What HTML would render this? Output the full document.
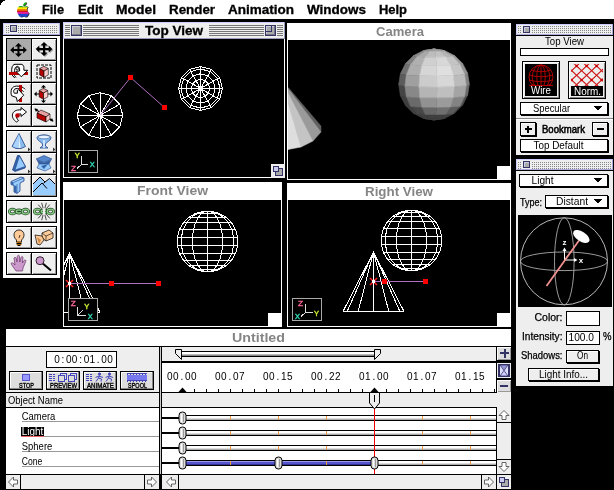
<!DOCTYPE html><html lang="en"><head><meta charset="utf-8"><title>3D Modeler - Untitled</title><style>
html,body{margin:0;padding:0;background:#000;}
#screen{position:relative;width:614px;height:490px;overflow:hidden;background:#000;font-family:"Liberation Sans",sans-serif;}
.win{position:absolute;overflow:hidden;will-change:transform;}
.win svg{position:absolute;left:0;top:0;display:block;}
text{white-space:pre;}
</style></head><body><div id="screen">
<div class="win menubar" style="left:0px;top:0px;width:614px;height:20px"><svg width="614" height="20" viewBox="0 0 614 20" shape-rendering="crispEdges"><rect x="0" y="0" width="614" height="19" fill="#ffffff" /><rect x="0" y="19" width="614" height="1" fill="#000000" /><rect x="0" y="0" width="5" height="1" fill="#000" /><rect x="0" y="1" width="3" height="1" fill="#000" /><rect x="0" y="2" width="2" height="1" fill="#000" /><rect x="0" y="3" width="1" height="1" fill="#000" /><rect x="0" y="4" width="1" height="1" fill="#000" /><clipPath id="apc"><path d="M19,6.6 C21,5.4 22,6.8 23.3,6.8 C24.8,6.8 26.2,5.4 28.2,6.8 C26.6,8.2 26.3,11 29,13 C28.2,15 27.2,17 25.8,17 C24.8,17 24.2,16.4 23.3,16.4 C22.4,16.4 21.8,17 20.8,17 C19,17 17,13 17,10.6 C17,8.6 18,7.1 19,6.6 Z M23,6 C23,3.8 24.6,2.3 26.4,2 C26.5,4 25,5.8 23,6 Z"/></clipPath><g shape-rendering="geometricPrecision"><path d="M19,6.6 C21,5.4 22,6.8 23.3,6.8 C24.8,6.8 26.2,5.4 28.2,6.8 C26.6,8.2 26.3,11 29,13 C28.2,15 27.2,17 25.8,17 C24.8,17 24.2,16.4 23.3,16.4 C22.4,16.4 21.8,17 20.8,17 C19,17 17,13 17,10.6 C17,8.6 18,7.1 19,6.6 Z M23,6 C23,3.8 24.6,2.3 26.4,2 C26.5,4 25,5.8 23,6 Z" fill="#333" transform="translate(0.7,0.5)"/><g clip-path="url(#apc)"><rect x="16" y="2" width="15" height="5.4" fill="#11aa11" /><rect x="16" y="7.2" width="15" height="2.2" fill="#ffe800" /><rect x="16" y="9.2" width="15" height="1.699999999999999" fill="#ff8800" /><rect x="16" y="10.7" width="15" height="1.400000000000001" fill="#dd1111" /><rect x="16" y="11.9" width="15" height="2.2" fill="#e020a0" /><rect x="16" y="13.9" width="15" height="3.8" fill="#2244cc" /></g></g><text x="42" y="14" font-family='"Liberation Sans", sans-serif' font-size="12" font-weight="bold" fill="#000" text-anchor="start" textLength="22" lengthAdjust="spacingAndGlyphs" stroke="#000" stroke-width="0.3">File</text><text x="78" y="14" font-family='"Liberation Sans", sans-serif' font-size="12" font-weight="bold" fill="#000" text-anchor="start" textLength="25" lengthAdjust="spacingAndGlyphs" stroke="#000" stroke-width="0.3">Edit</text><text x="116" y="14" font-family='"Liberation Sans", sans-serif' font-size="12" font-weight="bold" fill="#000" text-anchor="start" textLength="40" lengthAdjust="spacingAndGlyphs" stroke="#000" stroke-width="0.3">Model</text><text x="169" y="14" font-family='"Liberation Sans", sans-serif' font-size="12" font-weight="bold" fill="#000" text-anchor="start" textLength="46" lengthAdjust="spacingAndGlyphs" stroke="#000" stroke-width="0.3">Render</text><text x="228" y="14" font-family='"Liberation Sans", sans-serif' font-size="12" font-weight="bold" fill="#000" text-anchor="start" textLength="66" lengthAdjust="spacingAndGlyphs" stroke="#000" stroke-width="0.3">Animation</text><text x="307" y="14" font-family='"Liberation Sans", sans-serif' font-size="12" font-weight="bold" fill="#000" text-anchor="start" textLength="59" lengthAdjust="spacingAndGlyphs" stroke="#000" stroke-width="0.3">Windows</text><text x="379" y="14" font-family='"Liberation Sans", sans-serif' font-size="12" font-weight="bold" fill="#000" text-anchor="start" textLength="28" lengthAdjust="spacingAndGlyphs" stroke="#000" stroke-width="0.3">Help</text></svg></div>
<div class="win palette" style="left:3px;top:23px;width:57px;height:255px"><svg width="57" height="255" viewBox="3 23 57 255" shape-rendering="crispEdges"><defs><pattern id="dots" width="2" height="2" patternUnits="userSpaceOnUse"><rect x="0" y="0" width="1" height="1" fill="#888888"/></pattern></defs><rect x="3" y="23" width="57" height="255" fill="#ffffff" /><rect x="3" y="23" width="57" height="12" fill="#eeeeee" /><rect x="3" y="23" width="57" height="1" fill="#ccccff" /><rect x="3" y="34" width="57" height="1" fill="#aaaadd" /><rect x="3" y="23" width="1" height="12" fill="#ccccff" /><rect x="59" y="23" width="1" height="12" fill="#aaaadd" /><rect x="5" y="25" width="53" height="9" fill="url(#dots)"/><rect x="9" y="24" width="9" height="10" fill="#eeeeee" /><rect x="10.5" y="25.5" width="6" height="6" fill="#aaaaaa" stroke="#333366" stroke-width="1"/><rect x="11" y="26" width="5" height="1" fill="#ccccdd" /><rect x="11" y="26" width="1" height="5" fill="#ccccdd" /><rect x="3" y="35" width="57" height="1" fill="#000" /><rect x="6" y="38" width="51" height="89" fill="#000" /><rect x="7" y="39" width="24" height="21" fill="#aaaaaa" /><g shape-rendering="geometricPrecision"><rect x="12.2" y="49.0" width="12.600000000000001" height="2" fill="#000" /><rect x="17.5" y="45.0" width="2" height="10" fill="#000" /><polygon points="10.2,50.0 13.8,46.4 13.8,53.6" fill="#000" stroke="none" stroke-width="1" /><polygon points="26.8,50.0 23.2,46.4 23.2,53.6" fill="#000" stroke="none" stroke-width="1" /><polygon points="18.5,43.0 14.9,46.6 22.1,46.6" fill="#000" stroke="none" stroke-width="1" /><polygon points="18.5,57.0 14.9,53.4 22.1,53.4" fill="#000" stroke="none" stroke-width="1" /></g><rect x="32" y="39" width="24" height="21" fill="#eeeeee" /><rect x="32" y="39" width="24" height="1" fill="#ffffff" /><rect x="32" y="39" width="1" height="21" fill="#ffffff" /><rect x="33" y="59" width="23" height="1" fill="#999999" /><rect x="55" y="40" width="1" height="20" fill="#999999" /><g shape-rendering="geometricPrecision"><rect x="38.7" y="49.0" width="12.600000000000001" height="2" fill="#999999" /><rect x="44.0" y="45.0" width="2" height="10" fill="#999999" /><polygon points="36.7,50.0 40.3,46.4 40.3,53.6" fill="#999999" stroke="none" stroke-width="1" /><polygon points="53.3,50.0 49.7,46.4 49.7,53.6" fill="#999999" stroke="none" stroke-width="1" /><polygon points="45,43.0 41.4,46.6 48.6,46.6" fill="#999999" stroke="none" stroke-width="1" /><polygon points="45,57.0 41.4,53.4 48.6,53.4" fill="#999999" stroke="none" stroke-width="1" /><rect x="37.7" y="48.0" width="12.600000000000001" height="2" fill="#000" /><rect x="43.0" y="44.0" width="2" height="10" fill="#000" /><polygon points="35.7,49.0 39.3,45.4 39.3,52.6" fill="#000" stroke="none" stroke-width="1" /><polygon points="52.3,49.0 48.7,45.4 48.7,52.6" fill="#000" stroke="none" stroke-width="1" /><polygon points="44,42.0 40.4,45.6 47.6,45.6" fill="#000" stroke="none" stroke-width="1" /><polygon points="44,56.0 40.4,52.4 47.6,52.4" fill="#000" stroke="none" stroke-width="1" /></g><rect x="7" y="61" width="24" height="21" fill="#eeeeee" /><rect x="7" y="61" width="24" height="1" fill="#ffffff" /><rect x="7" y="61" width="1" height="21" fill="#ffffff" /><rect x="8" y="81" width="23" height="1" fill="#999999" /><rect x="30" y="62" width="1" height="20" fill="#999999" /><g shape-rendering="geometricPrecision"><rect x="9" y="72" width="19" height="3" fill="#bb0000" /><path d="M14.8,78 L12.1,75 C11.6,72 11.6,69.5 11.9,68 C12.3,65.8 13.5,64.3 15,64.3 L22,64.3 C23.3,65.2 23.9,66.5 23.9,67.5 L23.9,70.3 27.8,70.3 21.4,76.8 15.9,71.3 19.6,71 19.6,68.8 C19.4,67 18,66.3 17.2,66.4 C16.2,66.5 15.3,67.3 15,68.5 C14.2,71 14,74 14.5,75.5 L16,77.5" fill="#fff" stroke="#000" stroke-width="1" /><circle cx="17.3" cy="68.5" r="1.3" fill="none" stroke="#000" stroke-width="0.8"/><rect x="9" y="72" width="7.5" height="3" fill="#bb0000" /></g><rect x="32" y="61" width="24" height="21" fill="#eeeeee" /><rect x="32" y="61" width="24" height="1" fill="#ffffff" /><rect x="32" y="61" width="1" height="21" fill="#ffffff" /><rect x="33" y="81" width="23" height="1" fill="#999999" /><rect x="55" y="62" width="1" height="20" fill="#999999" /><g shape-rendering="geometricPrecision"><polyline points="37,65 51,65 51,78 37,78 37,65" fill="none" stroke="#000" stroke-width="1" stroke-dasharray="3 1"/><polygon points="44,66.34 48.3,68.5 44,71.06 39.7,68.5" fill="#e8a0a0" stroke="#000" stroke-width="0.6" /><polygon points="39.7,68.7 44,71.06 44,77.3 39.7,74.94" fill="#bb0000" stroke="#000" stroke-width="0.6" /><polygon points="48.3,68.7 44,71.06 44,77.3 48.3,74.94" fill="#ffcccc" stroke="#000" stroke-width="0.6" /></g><rect x="7" y="83" width="24" height="21" fill="#eeeeee" /><rect x="7" y="83" width="24" height="1" fill="#ffffff" /><rect x="7" y="83" width="1" height="21" fill="#ffffff" /><rect x="8" y="103" width="23" height="1" fill="#999999" /><rect x="30" y="84" width="1" height="20" fill="#999999" /><g shape-rendering="geometricPrecision"><rect x="19" y="85" width="3" height="17" fill="#bb0000" /><path d="M25,89.3 C23.5,87 20,86 16.4,86.1 C14,86.3 12.3,87.5 11.6,89 C10.8,91 10.9,94 11.6,95.7 L16.4,97.5 17.3,101.6 23.7,95.2 18.7,89.7 17.4,90.2 17.4,93.2 14.3,93.2 C13.5,92 13.5,90.5 14,89.8 C15,88.5 17,88.3 18.5,88.5 C20.5,88.8 22.5,90 23.5,91.8" fill="#fff" stroke="#000" stroke-width="1" /><rect x="19" y="85" width="3" height="4.6" fill="#bb0000" /><polygon points="19,102 22,102 22,97.6 19,100.4" fill="#bb0000" stroke="none" stroke-width="1" /></g><rect x="32" y="83" width="24" height="21" fill="#eeeeee" /><rect x="32" y="83" width="24" height="1" fill="#ffffff" /><rect x="32" y="83" width="1" height="21" fill="#ffffff" /><rect x="33" y="103" width="23" height="1" fill="#999999" /><rect x="55" y="84" width="1" height="20" fill="#999999" /><g shape-rendering="geometricPrecision"><rect x="36.0" y="93.5" width="15.0" height="1" fill="#000" /><rect x="43.0" y="87.0" width="1" height="14" fill="#000" /><polygon points="34.0,94.0 36.6,91.4 36.6,96.6" fill="#000" stroke="none" stroke-width="1" /><polygon points="53.0,94.0 50.4,91.4 50.4,96.6" fill="#000" stroke="none" stroke-width="1" /><polygon points="43.5,85.0 40.9,87.6 46.1,87.6" fill="#000" stroke="none" stroke-width="1" /><polygon points="43.5,103.0 40.9,100.4 46.1,100.4" fill="#000" stroke="none" stroke-width="1" /><polygon points="43.5,88.34 47.8,90.5 43.5,93.06 39.2,90.5" fill="#e8a0a0" stroke="#000" stroke-width="0.6" /><polygon points="39.2,90.7 43.5,93.06 43.5,99.3 39.2,96.94" fill="#bb0000" stroke="#000" stroke-width="0.6" /><polygon points="47.8,90.7 43.5,93.06 43.5,99.3 47.8,96.94" fill="#ffcccc" stroke="#000" stroke-width="0.6" /></g><rect x="7" y="105" width="24" height="21" fill="#eeeeee" /><rect x="7" y="105" width="24" height="1" fill="#ffffff" /><rect x="7" y="105" width="1" height="21" fill="#ffffff" /><rect x="8" y="125" width="23" height="1" fill="#999999" /><rect x="30" y="106" width="1" height="20" fill="#999999" /><g shape-rendering="geometricPrecision"><path d="M16.5,122 C10,118 11,109 21,110 L21,107.5 L26.5,112 L21,116.5 L21,114 C16,113.5 15,117 18.5,120.5 Z" fill="#fff" stroke="#000" stroke-width="1" /><circle cx="17.5" cy="115.5" r="2.3" fill="#bb0000"/></g><rect x="32" y="105" width="24" height="21" fill="#eeeeee" /><rect x="32" y="105" width="24" height="1" fill="#ffffff" /><rect x="32" y="105" width="1" height="21" fill="#ffffff" /><rect x="33" y="125" width="23" height="1" fill="#999999" /><rect x="55" y="106" width="1" height="20" fill="#999999" /><g shape-rendering="geometricPrecision"><line x1="35" y1="109" x2="53" y2="121" stroke="#000" stroke-width="1.2" /><polygon points="34.5,108.5 38,109 36,112" fill="#000" stroke="none" stroke-width="1" /><polygon points="53.5,121.5 50,121 52,118" fill="#000" stroke="none" stroke-width="1" /><polygon points="37,113 41,110 50,114 46,117" fill="#e8a0a0" stroke="#000" stroke-width="0.6" /><polygon points="37,113 46,117 46,122 37,118" fill="#bb0000" stroke="#000" stroke-width="0.6" /><polygon points="46,117 50,114 50,119 46,122" fill="#ffcccc" stroke="#000" stroke-width="0.6" /></g><rect x="6" y="130" width="51" height="67" fill="#000" /><rect x="7" y="131" width="24" height="21" fill="#eeeeee" /><rect x="7" y="131" width="24" height="1" fill="#ffffff" /><rect x="7" y="131" width="1" height="21" fill="#ffffff" /><rect x="8" y="151" width="23" height="1" fill="#999999" /><rect x="30" y="132" width="1" height="20" fill="#999999" /><g shape-rendering="geometricPrecision"><polygon points="19,133.5 25.5,146.5 21,148.5 16,148.5 12,146.5" fill="#88bbee" stroke="#224488" stroke-width="0.8" /><polygon points="19,134 20.5,148 18.5,148" fill="#e8f4ff" stroke="none" stroke-width="1" /><polygon points="19,134 18,148 13,146.5" fill="#aad4ff" stroke="none" stroke-width="1" /><polygon points="28,147.5 28,151.5 30.3,149.5" fill="#333" stroke="none" stroke-width="1" /></g><rect x="32" y="131" width="24" height="21" fill="#eeeeee" /><rect x="32" y="131" width="24" height="1" fill="#ffffff" /><rect x="32" y="131" width="1" height="21" fill="#ffffff" /><rect x="33" y="151" width="23" height="1" fill="#999999" /><rect x="55" y="132" width="1" height="20" fill="#999999" /><g shape-rendering="geometricPrecision"><path d="M37,137.5 C38,134 50,134 51,137.5 C51,141 46,142 45.5,144 L45.5,146 L48,148 L40,148 L42.5,146 L42.5,144 C42,142 37,141 37,137.5 Z" fill="#88bbee" stroke="#224488" stroke-width="0.8" /><ellipse cx="44" cy="137" rx="6" ry="1.8" fill="#e8f4ff" stroke="#224488" stroke-width="0.5"/><rect x="43.3" y="140" width="1.4" height="8" fill="#e8f4ff" /><polygon points="53,147.5 53,151.5 55.3,149.5" fill="#333" stroke="none" stroke-width="1" /></g><rect x="7" y="153" width="24" height="21" fill="#eeeeee" /><rect x="7" y="153" width="24" height="1" fill="#ffffff" /><rect x="7" y="153" width="1" height="21" fill="#ffffff" /><rect x="8" y="173" width="23" height="1" fill="#999999" /><rect x="30" y="154" width="1" height="20" fill="#999999" /><g shape-rendering="geometricPrecision"><polygon points="17.5,155.5 19.5,155.5 25.5,166.5 25,168 15,171.5 12.5,170" fill="#3366aa" stroke="#224488" stroke-width="0.8" /><polygon points="19.5,156 25.3,166.5 15,170" fill="#99ccff" stroke="#224488" stroke-width="0.6" /><polygon points="28,169.5 28,173.5 30.3,171.5" fill="#333" stroke="none" stroke-width="1" /></g><rect x="32" y="153" width="24" height="21" fill="#eeeeee" /><rect x="32" y="153" width="24" height="1" fill="#ffffff" /><rect x="32" y="153" width="1" height="21" fill="#ffffff" /><rect x="33" y="173" width="23" height="1" fill="#999999" /><rect x="55" y="154" width="1" height="20" fill="#999999" /><g shape-rendering="geometricPrecision"><polygon points="36,159 44,155.5 52,159 44,162.5" fill="#5588cc" stroke="#224488" stroke-width="0.6" /><polygon points="37,160 44,163 51,160 49,164 44,166 39,164" fill="#3366aa" stroke="#224488" stroke-width="0.5" /><polygon points="39,164 49,164 51,168 45,171 37,168" fill="#99ccff" stroke="#224488" stroke-width="0.6" /><polygon points="41,166 48,164 44,169" fill="#3366aa" stroke="none" stroke-width="1" /><polygon points="53,169.5 53,173.5 55.3,171.5" fill="#333" stroke="none" stroke-width="1" /></g><rect x="7" y="175" width="24" height="21" fill="#eeeeee" /><rect x="7" y="175" width="24" height="1" fill="#ffffff" /><rect x="7" y="175" width="1" height="21" fill="#ffffff" /><rect x="8" y="195" width="23" height="1" fill="#999999" /><rect x="30" y="176" width="1" height="20" fill="#999999" /><g shape-rendering="geometricPrecision"><polygon points="11,181.5 21,177 24,178 24,181 20,183 20,191 17,193.5 14,192 14,185.5 11,184.5" fill="#99ccff" stroke="#224488" stroke-width="0.8" /><polygon points="11,181.5 13.5,182.5 13.5,185.3 11,184.5" fill="#3366aa" stroke="none" stroke-width="1" /><polygon points="14,185.5 16.5,186 16.5,193 14,192" fill="#3366aa" stroke="none" stroke-width="1" /><polyline points="13.5,182.5 23.5,178.2" fill="none" stroke="#224488" stroke-width="0.6" /><polyline points="17,184 17,193" fill="none" stroke="#224488" stroke-width="0.6" /></g><rect x="32" y="175" width="24" height="21" fill="#eeeeee" /><rect x="32" y="175" width="24" height="1" fill="#ffffff" /><rect x="32" y="175" width="1" height="21" fill="#ffffff" /><rect x="33" y="195" width="23" height="1" fill="#999999" /><rect x="55" y="176" width="1" height="20" fill="#999999" /><g shape-rendering="geometricPrecision"><polygon points="33,184 40,177 45,182 49.5,178.5 55,184 55,195 33,195" fill="#99ccff" stroke="none" stroke-width="1" /><polyline points="33,184 40,177 45,182 49.5,178.5 55,184" fill="none" stroke="#000" stroke-width="1" /><polyline points="33,192 42,183 47,188.5" fill="none" stroke="#000" stroke-width="1" /><polyline points="45,182 43.5,183.5" fill="none" stroke="#000" stroke-width="1" /></g><rect x="6" y="200" width="51" height="23" fill="#000" /><rect x="7" y="201" width="24" height="21" fill="#eeeeee" /><rect x="7" y="201" width="24" height="1" fill="#ffffff" /><rect x="7" y="201" width="1" height="21" fill="#ffffff" /><rect x="8" y="221" width="23" height="1" fill="#999999" /><rect x="30" y="202" width="1" height="20" fill="#999999" /><g shape-rendering="geometricPrecision"><ellipse cx="12.5" cy="211.5" rx="3.2" ry="2.4" fill="none" stroke="#224422" stroke-width="2.8"/><ellipse cx="12.5" cy="211.5" rx="3.2" ry="2.4" fill="none" stroke="#88cc88" stroke-width="1.4"/><ellipse cx="19" cy="211.5" rx="2.8" ry="1.5" fill="none" stroke="#224422" stroke-width="2.8"/><ellipse cx="19" cy="211.5" rx="2.8" ry="1.5" fill="none" stroke="#88cc88" stroke-width="1.4"/><ellipse cx="25.5" cy="211.5" rx="3.2" ry="2.4" fill="none" stroke="#224422" stroke-width="2.8"/><ellipse cx="25.5" cy="211.5" rx="3.2" ry="2.4" fill="none" stroke="#88cc88" stroke-width="1.4"/></g><rect x="32" y="201" width="24" height="21" fill="#eeeeee" /><rect x="32" y="201" width="24" height="1" fill="#ffffff" /><rect x="32" y="201" width="1" height="21" fill="#ffffff" /><rect x="33" y="221" width="23" height="1" fill="#999999" /><rect x="55" y="202" width="1" height="20" fill="#999999" /><g shape-rendering="geometricPrecision"><ellipse cx="37.5" cy="211.5" rx="3.2" ry="2.4" fill="none" stroke="#224422" stroke-width="2.8"/><ellipse cx="37.5" cy="211.5" rx="3.2" ry="2.4" fill="none" stroke="#88cc88" stroke-width="1.4"/><ellipse cx="44" cy="211.5" rx="2.8" ry="1.5" fill="none" stroke="#224422" stroke-width="2.8"/><ellipse cx="44" cy="211.5" rx="2.8" ry="1.5" fill="none" stroke="#88cc88" stroke-width="1.4"/><ellipse cx="50.5" cy="211.5" rx="3.2" ry="2.4" fill="none" stroke="#224422" stroke-width="2.8"/><ellipse cx="50.5" cy="211.5" rx="3.2" ry="2.4" fill="none" stroke="#88cc88" stroke-width="1.4"/><rect x="42.8" y="207" width="2.4" height="9" fill="#eeeeee" /><line x1="41.75" y1="208.82" x2="38.21" y2="204.61" stroke="#000" stroke-width="0.7" /><line x1="43.09" y1="208.12" x2="41.67" y2="202.81" stroke="#000" stroke-width="0.7" /><line x1="44.91" y1="208.12" x2="46.33" y2="202.81" stroke="#000" stroke-width="0.7" /><line x1="46.25" y1="208.82" x2="49.79" y2="204.61" stroke="#000" stroke-width="0.7" /><line x1="46.25" y1="214.18" x2="49.79" y2="218.39" stroke="#000" stroke-width="0.7" /><line x1="44.91" y1="214.88" x2="46.33" y2="220.19" stroke="#000" stroke-width="0.7" /><line x1="43.09" y1="214.88" x2="41.67" y2="220.19" stroke="#000" stroke-width="0.7" /><line x1="41.75" y1="214.18" x2="38.21" y2="218.39" stroke="#000" stroke-width="0.7" /></g><rect x="6" y="226" width="51" height="23" fill="#000" /><rect x="7" y="227" width="24" height="21" fill="#eeeeee" /><rect x="7" y="227" width="24" height="1" fill="#ffffff" /><rect x="7" y="227" width="1" height="21" fill="#ffffff" /><rect x="8" y="247" width="23" height="1" fill="#999999" /><rect x="30" y="228" width="1" height="20" fill="#999999" /><g shape-rendering="geometricPrecision"><path d="M16.5,240 C12,236 14,230 19,230 C24,230 26,236 21.5,240 L21.5,242 L16.5,242 Z" fill="#ffcc99" stroke="#000" stroke-width="0.8" /><rect x="16.5" y="242" width="5" height="1" fill="#aa6600" /><rect x="16.5" y="243" width="5" height="1" fill="#000" /><rect x="16.5" y="244" width="5" height="1" fill="#aa6600" /><rect x="17.5" y="245" width="3" height="1" fill="#000" /><line x1="20" y1="235" x2="19" y2="238" stroke="#000" stroke-width="0.7" /></g><rect x="32" y="227" width="24" height="21" fill="#eeeeee" /><rect x="32" y="227" width="24" height="1" fill="#ffffff" /><rect x="32" y="227" width="1" height="21" fill="#ffffff" /><rect x="33" y="247" width="23" height="1" fill="#999999" /><rect x="55" y="228" width="1" height="20" fill="#999999" /><g shape-rendering="geometricPrecision"><polygon points="42,233 49,230 53,233 53,238 46,241 42,238" fill="#ffcc99" stroke="#000" stroke-width="0.7" /><polygon points="35,235 42,236 44,240 40,245 37,244" fill="#ffcc99" stroke="#000" stroke-width="0.7" /><polygon points="37,237 41,240 39,244" fill="#cc8844" stroke="none" stroke-width="1" /><polyline points="42,233 46,236 53,233" fill="none" stroke="#000" stroke-width="0.6" /><polyline points="46,236 46,241" fill="none" stroke="#000" stroke-width="0.6" /></g><rect x="6" y="252" width="51" height="23" fill="#000" /><rect x="7" y="253" width="24" height="21" fill="#eeeeee" /><rect x="7" y="253" width="24" height="1" fill="#ffffff" /><rect x="7" y="253" width="1" height="21" fill="#ffffff" /><rect x="8" y="273" width="23" height="1" fill="#999999" /><rect x="30" y="254" width="1" height="20" fill="#999999" /><g shape-rendering="geometricPrecision"><path d="M16,271 L11.5,264.5 C10.5,262.5 12.5,262 14,264 L15,265 L14,258.5 C14,257 16,257 16.3,258.5 L17,262 L17.3,256.5 C17.5,255 19.5,255 19.5,256.5 L19.8,262 L21,257.5 C21.5,256 23.3,256.5 23,258 L22.3,263 L24,260.5 C25,259.3 26.3,260 25.7,261.5 L23,268 L22.5,271 Z" fill="#cc99cc" stroke="#663366" stroke-width="0.7" /></g><rect x="32" y="253" width="24" height="21" fill="#eeeeee" /><rect x="32" y="253" width="24" height="1" fill="#ffffff" /><rect x="32" y="253" width="1" height="21" fill="#ffffff" /><rect x="33" y="273" width="23" height="1" fill="#999999" /><rect x="55" y="254" width="1" height="20" fill="#999999" /><g shape-rendering="geometricPrecision"><line x1="42.5" y1="263.3" x2="51" y2="270.5" stroke="#000" stroke-width="2" /><circle cx="40" cy="260.7" r="4" fill="#cc99cc" stroke="#332233" stroke-width="1"/></g></svg></div>
<div class="win view" style="left:63px;top:22px;width:222px;height:156px"><svg width="222" height="156" viewBox="63 22 222 156" shape-rendering="crispEdges"><rect x="63" y="22" width="222" height="156" fill="#fff" /><rect x="64" y="39" width="220" height="138" fill="#000" /><rect x="63" y="22" width="222" height="17" fill="#eeeeee" /><rect x="63" y="22" width="222" height="1" fill="#ccccff" /><rect x="63" y="38" width="222" height="1" fill="#9999bb" /><rect x="63" y="22" width="1" height="17" fill="#ccccff" /><rect x="284" y="22" width="1" height="17" fill="#9999bb" /><rect x="65" y="25" width="218" height="1" fill="#777777" /><rect x="65" y="27" width="218" height="1" fill="#777777" /><rect x="65" y="29" width="218" height="1" fill="#777777" /><rect x="65" y="31" width="218" height="1" fill="#777777" /><rect x="65" y="33" width="218" height="1" fill="#777777" /><rect x="65" y="35" width="218" height="1" fill="#777777" /><rect x="70" y="24" width="13" height="13" fill="#eeeeee" /><rect x="71.5" y="25.5" width="10" height="10" fill="#aaaaaa" stroke="#333366" stroke-width="1"/><rect x="72" y="26" width="9" height="1" fill="#ccccdd" /><rect x="72" y="26" width="1" height="9" fill="#ccccdd" /><rect x="72" y="34" width="9" height="1" fill="#777788" /><rect x="80" y="26" width="1" height="9" fill="#777788" /><rect x="264" y="24" width="13" height="13" fill="#eeeeee" /><rect x="265.5" y="25.5" width="10" height="10" fill="#aaaaaa" stroke="#333366" stroke-width="1"/><rect x="266" y="26" width="9" height="1" fill="#ccccdd" /><rect x="266" y="26" width="1" height="9" fill="#ccccdd" /><rect x="266" y="34" width="9" height="1" fill="#777788" /><rect x="274" y="26" width="1" height="9" fill="#777788" /><rect x="266" y="31" width="6" height="1" fill="#333366" /><rect x="271" y="26" width="1" height="6" fill="#333366" /><rect x="139" y="23" width="70" height="15" fill="#eeeeee" /><text x="174.0" y="35" font-family='"Liberation Sans", sans-serif' font-size="12" font-weight="bold" fill="#000" text-anchor="middle" textLength="58" lengthAdjust="spacingAndGlyphs" stroke="#000" stroke-width="0.3">Top View</text><polyline points="100.0,92.7 111.4,95.75 119.75,104.1 122.8,115.5 119.75,126.9 111.4,135.25 100.0,138.3 88.6,135.25 80.25,126.9 77.2,115.5 80.25,104.1 88.6,95.75 100.0,92.7" fill="none" stroke="#fff" stroke-width="1" /><line x1="100" y1="115.5" x2="100.0" y2="92.7" stroke="#fff" stroke-width="1" /><line x1="100" y1="115.5" x2="111.4" y2="95.75" stroke="#fff" stroke-width="1" /><line x1="100" y1="115.5" x2="119.75" y2="104.1" stroke="#fff" stroke-width="1" /><line x1="100" y1="115.5" x2="122.8" y2="115.5" stroke="#fff" stroke-width="1" /><line x1="100" y1="115.5" x2="119.75" y2="126.9" stroke="#fff" stroke-width="1" /><line x1="100" y1="115.5" x2="111.4" y2="135.25" stroke="#fff" stroke-width="1" /><line x1="100" y1="115.5" x2="100.0" y2="138.3" stroke="#fff" stroke-width="1" /><line x1="100" y1="115.5" x2="88.6" y2="135.25" stroke="#fff" stroke-width="1" /><line x1="100" y1="115.5" x2="80.25" y2="126.9" stroke="#fff" stroke-width="1" /><line x1="100" y1="115.5" x2="77.2" y2="115.5" stroke="#fff" stroke-width="1" /><line x1="100" y1="115.5" x2="80.25" y2="104.1" stroke="#fff" stroke-width="1" /><line x1="100" y1="115.5" x2="88.6" y2="95.75" stroke="#fff" stroke-width="1" /><rect x="98.5" y="114.0" width="3" height="3" fill="#fff" /><polyline points="200.5,66.5 211.5,69.45 219.55,77.5 222.5,88.5 219.55,99.5 211.5,107.55 200.5,110.5 189.5,107.55 181.45,99.5 178.5,88.5 181.45,77.5 189.5,69.45 200.5,66.5" fill="none" stroke="#fff" stroke-width="1" /><polyline points="200.5,68.92 210.29,71.54 217.46,78.71 220.08,88.5 217.46,98.29 210.29,105.46 200.5,108.08 190.71,105.46 183.54,98.29 180.92,88.5 183.54,78.71 190.71,71.54 200.5,68.92" fill="none" stroke="#fff" stroke-width="1" /><polyline points="200.5,73.76 207.87,75.73 213.27,81.13 215.24,88.5 213.27,95.87 207.87,101.27 200.5,103.24 193.13,101.27 187.73,95.87 185.76,88.5 187.73,81.13 193.13,75.73 200.5,73.76" fill="none" stroke="#fff" stroke-width="1" /><polyline points="200.5,79.26 205.12,80.5 208.5,83.88 209.74,88.5 208.5,93.12 205.12,96.5 200.5,97.74 195.88,96.5 192.5,93.12 191.26,88.5 192.5,83.88 195.88,80.5 200.5,79.26" fill="none" stroke="#fff" stroke-width="1" /><line x1="200.5" y1="88.5" x2="200.5" y2="66.5" stroke="#fff" stroke-width="1" /><line x1="200.5" y1="88.5" x2="211.5" y2="69.45" stroke="#fff" stroke-width="1" /><line x1="200.5" y1="88.5" x2="219.55" y2="77.5" stroke="#fff" stroke-width="1" /><line x1="200.5" y1="88.5" x2="222.5" y2="88.5" stroke="#fff" stroke-width="1" /><line x1="200.5" y1="88.5" x2="219.55" y2="99.5" stroke="#fff" stroke-width="1" /><line x1="200.5" y1="88.5" x2="211.5" y2="107.55" stroke="#fff" stroke-width="1" /><line x1="200.5" y1="88.5" x2="200.5" y2="110.5" stroke="#fff" stroke-width="1" /><line x1="200.5" y1="88.5" x2="189.5" y2="107.55" stroke="#fff" stroke-width="1" /><line x1="200.5" y1="88.5" x2="181.45" y2="99.5" stroke="#fff" stroke-width="1" /><line x1="200.5" y1="88.5" x2="178.5" y2="88.5" stroke="#fff" stroke-width="1" /><line x1="200.5" y1="88.5" x2="181.45" y2="77.5" stroke="#fff" stroke-width="1" /><line x1="200.5" y1="88.5" x2="189.5" y2="69.45" stroke="#fff" stroke-width="1" /><rect x="198.0" y="86.0" width="5" height="5" fill="#fff" /><polyline points="100.5,115 130.5,77.5 164.5,107.5" fill="none" stroke="#b070c0" stroke-width="1" shape-rendering="geometricPrecision"/><rect x="128.0" y="75.0" width="5" height="5" fill="#ff0000" /><rect x="162.0" y="105.0" width="5" height="5" fill="#ff0000" /><rect x="68" y="150" width="30" height="23" fill="#000" /><rect x="68.5" y="150.5" width="29" height="22" fill="none" stroke="#aaaaaa" stroke-width="1"/><line x1="81.5" y1="156" x2="81.5" y2="165" stroke="#dddddd" stroke-width="1" /><line x1="81.5" y1="164.5" x2="88" y2="164.5" stroke="#dddddd" stroke-width="1" /><line x1="81.5" y1="164.5" x2="77" y2="168.5" stroke="#dddddd" stroke-width="1" /><text x="77.2" y="158.2" font-family='"Liberation Sans", sans-serif' font-size="7.5" font-weight="normal" fill="#ccee33" text-anchor="middle" textLength="5" lengthAdjust="spacingAndGlyphs" stroke="#ccee33" stroke-width="0.4">Y</text><text x="92.2" y="167.2" font-family='"Liberation Sans", sans-serif' font-size="7.5" font-weight="normal" fill="#33ddbb" text-anchor="middle" textLength="5" lengthAdjust="spacingAndGlyphs" stroke="#33ddbb" stroke-width="0.4">X</text><text x="73.5" y="170.7" font-family='"Liberation Sans", sans-serif' font-size="7.5" font-weight="normal" fill="#ff6699" text-anchor="middle" textLength="5" lengthAdjust="spacingAndGlyphs" stroke="#ff6699" stroke-width="0.4">Z</text><rect x="271" y="164" width="14" height="14" fill="#eeeeee" /><rect x="275.5" y="168.5" width="7" height="7" fill="#aaaaaa" stroke="#333366" stroke-width="1"/><rect x="273.5" y="166.5" width="5" height="5" fill="#ccccee" stroke="#333366" stroke-width="1"/></svg></div>
<div class="win view" style="left:287px;top:23px;width:224px;height:157px"><svg width="224" height="157" viewBox="287 23 224 157" shape-rendering="crispEdges"><rect x="287" y="23" width="224" height="157" fill="#fff" /><rect x="288" y="40" width="222" height="139" fill="#000" /><rect x="287" y="23" width="224" height="17" fill="#ffffff" /><text x="400.0" y="36" font-family='"Liberation Sans", sans-serif' font-size="12" font-weight="bold" fill="#858585" text-anchor="middle" textLength="48" lengthAdjust="spacingAndGlyphs" >Camera</text><g shape-rendering="geometricPrecision"><polygon points="433.04,50.06 427.71,50.19 434.0,49.09 434.0,49.09" fill="#737373" stroke="#737373" stroke-width="0.6" /><polygon points="407.97,62.84 405.39,63.86 413.21,55.98 415.09,55.23" fill="#4c4c4c" stroke="#4c4c4c" stroke-width="0.6" /><polygon points="442.99,50.38 438.64,50.13 434.0,49.09 434.0,49.09" fill="#7b7b7b" stroke="#7b7b7b" stroke-width="0.6" /><polygon points="434.0,119.91 434.0,119.91 444.93,118.11 443.94,118.5" fill="#3f3f3f" stroke="#3f3f3f" stroke-width="0.6" /><polygon points="427.71,50.19 424.06,50.5 434.0,49.09 434.0,49.09" fill="#777777" stroke="#777777" stroke-width="0.6" /><polygon points="415.09,55.23 413.21,55.98 423.07,50.89 424.06,50.5" fill="#686868" stroke="#686868" stroke-width="0.6" /><polygon points="434.0,119.91 434.0,119.91 425.01,118.62 423.07,118.25" fill="#3f3f3f" stroke="#3f3f3f" stroke-width="0.6" /><polygon points="444.93,50.75 442.99,50.38 434.0,49.09 434.0,49.09" fill="#868686" stroke="#868686" stroke-width="0.6" /><polygon points="443.94,118.5 444.93,118.11 454.79,113.02 452.91,113.77" fill="#3f3f3f" stroke="#3f3f3f" stroke-width="0.6" /><polygon points="434.0,119.91 434.0,119.91 443.94,118.5 440.29,118.81" fill="#3f3f3f" stroke="#3f3f3f" stroke-width="0.6" /><polygon points="424.06,50.5 423.07,50.89 434.0,49.09 434.0,49.09" fill="#808080" stroke="#808080" stroke-width="0.6" /><polygon points="434.0,119.91 434.0,119.91 429.36,118.87 425.01,118.62" fill="#3f3f3f" stroke="#3f3f3f" stroke-width="0.6" /><polygon points="452.91,113.77 454.79,113.02 462.61,105.14 460.03,106.16" fill="#3f3f3f" stroke="#3f3f3f" stroke-width="0.6" /><polygon points="434.0,119.91 434.0,119.91 440.29,118.81 434.96,118.94" fill="#3f3f3f" stroke="#3f3f3f" stroke-width="0.6" /><polygon points="434.0,119.91 434.0,119.91 434.96,118.94 429.36,118.87" fill="#3f3f3f" stroke="#3f3f3f" stroke-width="0.6" /><polygon points="423.07,118.25 425.01,118.62 416.91,113.99 413.21,113.28" fill="#3f3f3f" stroke="#3f3f3f" stroke-width="0.6" /><polygon points="443.94,51.14 444.93,50.75 434.0,49.09 434.0,49.09" fill="#919191" stroke="#919191" stroke-width="0.6" /><polygon points="423.07,50.89 425.01,51.26 434.0,49.09 434.0,49.09" fill="#8b8b8b" stroke="#8b8b8b" stroke-width="0.6" /><polygon points="460.03,106.16 462.61,105.14 467.63,95.24 464.6,96.44" fill="#4f4f4f" stroke="#4f4f4f" stroke-width="0.6" /><polygon points="452.91,56.47 454.79,55.72 444.93,50.75 443.94,51.14" fill="#9b9b9b" stroke="#9b9b9b" stroke-width="0.6" /><polygon points="464.6,96.44 467.63,95.24 469.36,84.28 466.17,85.55" fill="#6b6b6b" stroke="#6b6b6b" stroke-width="0.6" /><polygon points="440.29,51.45 443.94,51.14 434.0,49.09 434.0,49.09" fill="#9b9b9b" stroke="#9b9b9b" stroke-width="0.6" /><polygon points="460.03,64.53 462.61,63.51 454.79,55.72 452.91,56.47" fill="#9b9b9b" stroke="#9b9b9b" stroke-width="0.6" /><polygon points="466.17,85.55 469.36,84.28 467.63,73.35 464.6,74.55" fill="#828282" stroke="#828282" stroke-width="0.6" /><polygon points="464.6,74.55 467.63,73.35 462.61,63.51 460.03,64.53" fill="#939393" stroke="#939393" stroke-width="0.6" /><polygon points="425.01,51.26 429.36,51.51 434.0,49.09 434.0,49.09" fill="#969696" stroke="#969696" stroke-width="0.6" /><polygon points="413.21,113.28 416.91,113.99 410.47,106.46 405.39,105.49" fill="#3f3f3f" stroke="#3f3f3f" stroke-width="0.6" /><polygon points="434.96,51.58 440.29,51.45 434.0,49.09 434.0,49.09" fill="#9f9f9f" stroke="#9f9f9f" stroke-width="0.6" /><polygon points="413.21,55.98 416.91,56.68 425.01,51.26 423.07,50.89" fill="#898989" stroke="#898989" stroke-width="0.6" /><polygon points="429.36,51.51 434.96,51.58 434.0,49.09 434.0,49.09" fill="#9d9d9d" stroke="#9d9d9d" stroke-width="0.6" /><polygon points="440.29,118.81 443.94,118.5 452.91,113.77 445.97,114.34" fill="#3f3f3f" stroke="#3f3f3f" stroke-width="0.6" /><polygon points="405.39,105.49 410.47,106.46 406.34,96.79 400.37,95.65" fill="#3f3f3f" stroke="#3f3f3f" stroke-width="0.6" /><polygon points="425.01,118.62 429.36,118.87 425.18,114.47 416.91,113.99" fill="#3f3f3f" stroke="#3f3f3f" stroke-width="0.6" /><polygon points="405.39,63.86 410.47,64.83 416.91,56.68 413.21,55.98" fill="#808080" stroke="#808080" stroke-width="0.6" /><polygon points="400.37,95.65 406.34,96.79 404.92,85.92 398.64,84.72" fill="#454545" stroke="#454545" stroke-width="0.6" /><polygon points="400.37,73.76 406.34,74.91 410.47,64.83 405.39,63.86" fill="#707070" stroke="#707070" stroke-width="0.6" /><polygon points="398.64,84.72 404.92,85.92 406.34,74.91 400.37,73.76" fill="#5c5c5c" stroke="#5c5c5c" stroke-width="0.6" /><polygon points="445.97,57.04 452.91,56.47 443.94,51.14 440.29,51.45" fill="#b5b5b5" stroke="#b5b5b5" stroke-width="0.6" /><polygon points="434.96,118.94 440.29,118.81 445.97,114.34 435.82,114.6" fill="#3f3f3f" stroke="#3f3f3f" stroke-width="0.6" /><polygon points="429.36,118.87 434.96,118.94 435.82,114.6 425.18,114.47" fill="#3f3f3f" stroke="#3f3f3f" stroke-width="0.6" /><polygon points="445.97,114.34 452.91,113.77 460.03,106.16 450.47,106.96" fill="#5b5b5b" stroke="#5b5b5b" stroke-width="0.6" /><polygon points="416.91,56.68 425.18,57.17 429.36,51.51 425.01,51.26" fill="#a8a8a8" stroke="#a8a8a8" stroke-width="0.6" /><polygon points="435.82,57.3 445.97,57.04 440.29,51.45 434.96,51.58" fill="#c2c2c2" stroke="#c2c2c2" stroke-width="0.6" /><polygon points="416.91,113.99 425.18,114.47 421.86,107.13 410.47,106.46" fill="#474747" stroke="#474747" stroke-width="0.6" /><polygon points="450.47,65.33 460.03,64.53 452.91,56.47 445.97,57.04" fill="#c4c4c4" stroke="#c4c4c4" stroke-width="0.6" /><polygon points="425.18,57.17 435.82,57.3 434.96,51.58 429.36,51.51" fill="#bdbdbd" stroke="#bdbdbd" stroke-width="0.6" /><polygon points="450.47,106.96 460.03,106.16 464.6,96.44 453.37,97.37" fill="#838383" stroke="#838383" stroke-width="0.6" /><polygon points="410.47,64.83 421.86,65.5 425.18,57.17 416.91,56.68" fill="#b0b0b0" stroke="#b0b0b0" stroke-width="0.6" /><polygon points="453.37,75.49 464.6,74.55 460.03,64.53 450.47,65.33" fill="#c6c6c6" stroke="#c6c6c6" stroke-width="0.6" /><polygon points="435.82,114.6 445.97,114.34 450.47,106.96 436.5,107.31" fill="#6f6f6f" stroke="#6f6f6f" stroke-width="0.6" /><polygon points="453.37,97.37 464.6,96.44 466.17,85.55 454.36,86.53" fill="#a4a4a4" stroke="#a4a4a4" stroke-width="0.6" /><polygon points="454.36,86.53 466.17,85.55 464.6,74.55 453.37,75.49" fill="#bbbbbb" stroke="#bbbbbb" stroke-width="0.6" /><polygon points="425.18,114.47 435.82,114.6 436.5,107.31 421.86,107.13" fill="#676767" stroke="#676767" stroke-width="0.6" /><polygon points="410.47,106.46 421.86,107.13 419.73,97.58 406.34,96.79" fill="#6a6a6a" stroke="#6a6a6a" stroke-width="0.6" /><polygon points="436.5,65.68 450.47,65.33 445.97,57.04 435.82,57.3" fill="#d8d8d8" stroke="#d8d8d8" stroke-width="0.6" /><polygon points="406.34,74.91 419.73,75.69 421.86,65.5 410.47,64.83" fill="#adadad" stroke="#adadad" stroke-width="0.6" /><polygon points="406.34,96.79 419.73,97.58 419.0,86.74 404.92,85.92" fill="#888888" stroke="#888888" stroke-width="0.6" /><polygon points="421.86,65.5 436.5,65.68 435.82,57.3 425.18,57.17" fill="#d0d0d0" stroke="#d0d0d0" stroke-width="0.6" /><polygon points="404.92,85.92 419.0,86.74 419.73,75.69 406.34,74.91" fill="#9f9f9f" stroke="#9f9f9f" stroke-width="0.6" /><polygon points="436.5,107.31 450.47,106.96 453.37,97.37 436.94,97.79" fill="#9b9b9b" stroke="#9b9b9b" stroke-width="0.6" /><polygon points="421.86,107.13 436.5,107.31 436.94,97.79 419.73,97.58" fill="#929292" stroke="#929292" stroke-width="0.6" /><polygon points="436.94,75.9 453.37,75.49 450.47,65.33 436.5,65.68" fill="#dfdfdf" stroke="#dfdfdf" stroke-width="0.6" /><polygon points="419.73,75.69 436.94,75.9 436.5,65.68 421.86,65.5" fill="#d6d6d6" stroke="#d6d6d6" stroke-width="0.6" /><polygon points="436.94,97.79 453.37,97.37 454.36,86.53 437.09,86.97" fill="#bfbfbf" stroke="#bfbfbf" stroke-width="0.6" /><polygon points="437.09,86.97 454.36,86.53 453.37,75.49 436.94,75.9" fill="#d7d7d7" stroke="#d7d7d7" stroke-width="0.6" /><polygon points="419.73,97.58 436.94,97.79 437.09,86.97 419.0,86.74" fill="#b5b5b5" stroke="#b5b5b5" stroke-width="0.6" /><polygon points="419.0,86.74 437.09,86.97 436.94,75.9 419.73,75.69" fill="#cccccc" stroke="#cccccc" stroke-width="0.6" /></g><clipPath id="camclip"><rect x="288" y="40" width="222" height="139"/></clipPath><g clip-path="url(#camclip)" shape-rendering="geometricPrecision"><polygon points="281,79 321,126 321,132" fill="#606060" stroke="#606060" stroke-width="0.5" /><polygon points="281,79 321,132 313,141" fill="#9a9a9a" stroke="#9a9a9a" stroke-width="0.5" /><polygon points="281,79 313,141 301,147" fill="#c4c4c4" stroke="#c4c4c4" stroke-width="0.5" /><polygon points="281,79 301,147 288,149.5" fill="#dedede" stroke="#dedede" stroke-width="0.5" /><polygon points="281,79 288,149.5 276,150" fill="#e6e6e6" stroke="#e6e6e6" stroke-width="0.5" /></g><rect x="497" y="166" width="14" height="14" fill="#fff" /></svg></div>
<div class="win view" style="left:63px;top:182px;width:219px;height:145px"><svg width="219" height="145" viewBox="63 182 219 145" shape-rendering="crispEdges"><rect x="63" y="182" width="219" height="145" fill="#fff" /><rect x="64" y="200" width="217" height="126" fill="#000" /><rect x="63" y="182" width="219" height="18" fill="#ffffff" /><text x="172.5" y="195" font-family='"Liberation Sans", sans-serif' font-size="12" font-weight="bold" fill="#858585" text-anchor="middle" textLength="71" lengthAdjust="spacingAndGlyphs" >Front View</text><polyline points="207.5,271.74 209.49,271.74 210.95,271.74 211.48,271.74 210.95,271.74 209.49,271.74 207.5,271.74 205.51,271.74 204.05,271.74 203.52,271.74 204.05,271.74 205.51,271.74 207.5,271.74" fill="none" stroke="#fff" stroke-width="1" /><polyline points="207.5,269.68 213.34,269.68 217.61,269.68 219.17,269.68 217.61,269.68 213.34,269.68 207.5,269.68 201.66,269.68 197.39,269.68 195.83,269.68 197.39,269.68 201.66,269.68 207.5,269.68" fill="none" stroke="#fff" stroke-width="1" /><polyline points="207.5,265.7 216.78,265.7 223.58,265.7 226.07,265.7 223.58,265.7 216.78,265.7 207.5,265.7 198.22,265.7 191.42,265.7 188.93,265.7 191.42,265.7 198.22,265.7 207.5,265.7" fill="none" stroke="#fff" stroke-width="1" /><polyline points="207.5,260.07 219.6,260.07 228.46,260.07 231.7,260.07 228.46,260.07 219.6,260.07 207.5,260.07 195.4,260.07 186.54,260.07 183.3,260.07 186.54,260.07 195.4,260.07 207.5,260.07" fill="none" stroke="#fff" stroke-width="1" /><polyline points="207.5,253.17 221.59,253.17 231.9,253.17 235.68,253.17 231.9,253.17 221.59,253.17 207.5,253.17 193.41,253.17 183.1,253.17 179.32,253.17 183.1,253.17 193.41,253.17 207.5,253.17" fill="none" stroke="#fff" stroke-width="1" /><polyline points="207.5,245.48 222.62,245.48 233.69,245.48 237.74,245.48 233.69,245.48 222.62,245.48 207.5,245.48 192.38,245.48 181.31,245.48 177.26,245.48 181.31,245.48 192.38,245.48 207.5,245.48" fill="none" stroke="#fff" stroke-width="1" /><polyline points="207.5,237.52 222.62,237.52 233.69,237.52 237.74,237.52 233.69,237.52 222.62,237.52 207.5,237.52 192.38,237.52 181.31,237.52 177.26,237.52 181.31,237.52 192.38,237.52 207.5,237.52" fill="none" stroke="#fff" stroke-width="1" /><polyline points="207.5,229.83 221.59,229.83 231.9,229.83 235.68,229.83 231.9,229.83 221.59,229.83 207.5,229.83 193.41,229.83 183.1,229.83 179.32,229.83 183.1,229.83 193.41,229.83 207.5,229.83" fill="none" stroke="#fff" stroke-width="1" /><polyline points="207.5,222.93 219.6,222.93 228.46,222.93 231.7,222.93 228.46,222.93 219.6,222.93 207.5,222.93 195.4,222.93 186.54,222.93 183.3,222.93 186.54,222.93 195.4,222.93 207.5,222.93" fill="none" stroke="#fff" stroke-width="1" /><polyline points="207.5,217.3 216.78,217.3 223.58,217.3 226.07,217.3 223.58,217.3 216.78,217.3 207.5,217.3 198.22,217.3 191.42,217.3 188.93,217.3 191.42,217.3 198.22,217.3 207.5,217.3" fill="none" stroke="#fff" stroke-width="1" /><polyline points="207.5,213.32 213.34,213.32 217.61,213.32 219.17,213.32 217.61,213.32 213.34,213.32 207.5,213.32 201.66,213.32 197.39,213.32 195.83,213.32 197.39,213.32 201.66,213.32 207.5,213.32" fill="none" stroke="#fff" stroke-width="1" /><polyline points="207.5,211.26 209.49,211.26 210.95,211.26 211.48,211.26 210.95,211.26 209.49,211.26 207.5,211.26 205.51,211.26 204.05,211.26 203.52,211.26 204.05,211.26 205.51,211.26 207.5,211.26" fill="none" stroke="#fff" stroke-width="1" /><polyline points="207.5,272.0 207.5,271.74 207.5,269.68 207.5,265.7 207.5,260.07 207.5,253.17 207.5,245.48 207.5,237.52 207.5,229.83 207.5,222.93 207.5,217.3 207.5,213.32 207.5,211.26 207.5,211.0" fill="none" stroke="#fff" stroke-width="1" /><polyline points="207.5,272.0 209.49,271.74 213.34,269.68 216.78,265.7 219.6,260.07 221.59,253.17 222.62,245.48 222.62,237.52 221.59,229.83 219.6,222.93 216.78,217.3 213.34,213.32 209.49,211.26 207.5,211.0" fill="none" stroke="#fff" stroke-width="1" /><polyline points="207.5,272.0 210.95,271.74 217.61,269.68 223.58,265.7 228.46,260.07 231.9,253.17 233.69,245.48 233.69,237.52 231.9,229.83 228.46,222.93 223.58,217.3 217.61,213.32 210.95,211.26 207.5,211.0" fill="none" stroke="#fff" stroke-width="1" /><polyline points="207.5,272.0 211.48,271.74 219.17,269.68 226.07,265.7 231.7,260.07 235.68,253.17 237.74,245.48 237.74,237.52 235.68,229.83 231.7,222.93 226.07,217.3 219.17,213.32 211.48,211.26 207.5,211.0" fill="none" stroke="#fff" stroke-width="1" /><polyline points="207.5,272.0 210.95,271.74 217.61,269.68 223.58,265.7 228.46,260.07 231.9,253.17 233.69,245.48 233.69,237.52 231.9,229.83 228.46,222.93 223.58,217.3 217.61,213.32 210.95,211.26 207.5,211.0" fill="none" stroke="#fff" stroke-width="1" /><polyline points="207.5,272.0 209.49,271.74 213.34,269.68 216.78,265.7 219.6,260.07 221.59,253.17 222.62,245.48 222.62,237.52 221.59,229.83 219.6,222.93 216.78,217.3 213.34,213.32 209.49,211.26 207.5,211.0" fill="none" stroke="#fff" stroke-width="1" /><polyline points="207.5,272.0 207.5,271.74 207.5,269.68 207.5,265.7 207.5,260.07 207.5,253.17 207.5,245.48 207.5,237.52 207.5,229.83 207.5,222.93 207.5,217.3 207.5,213.32 207.5,211.26 207.5,211.0" fill="none" stroke="#fff" stroke-width="1" /><polyline points="207.5,272.0 205.51,271.74 201.66,269.68 198.22,265.7 195.4,260.07 193.41,253.17 192.38,245.48 192.38,237.52 193.41,229.83 195.4,222.93 198.22,217.3 201.66,213.32 205.51,211.26 207.5,211.0" fill="none" stroke="#fff" stroke-width="1" /><polyline points="207.5,272.0 204.05,271.74 197.39,269.68 191.42,265.7 186.54,260.07 183.1,253.17 181.31,245.48 181.31,237.52 183.1,229.83 186.54,222.93 191.42,217.3 197.39,213.32 204.05,211.26 207.5,211.0" fill="none" stroke="#fff" stroke-width="1" /><polyline points="207.5,272.0 203.52,271.74 195.83,269.68 188.93,265.7 183.3,260.07 179.32,253.17 177.26,245.48 177.26,237.52 179.32,229.83 183.3,222.93 188.93,217.3 195.83,213.32 203.52,211.26 207.5,211.0" fill="none" stroke="#fff" stroke-width="1" /><polyline points="207.5,272.0 204.05,271.74 197.39,269.68 191.42,265.7 186.54,260.07 183.1,253.17 181.31,245.48 181.31,237.52 183.1,229.83 186.54,222.93 191.42,217.3 197.39,213.32 204.05,211.26 207.5,211.0" fill="none" stroke="#fff" stroke-width="1" /><polyline points="207.5,272.0 205.51,271.74 201.66,269.68 198.22,265.7 195.4,260.07 193.41,253.17 192.38,245.48 192.38,237.52 193.41,229.83 195.4,222.93 198.22,217.3 201.66,213.32 205.51,211.26 207.5,211.0" fill="none" stroke="#fff" stroke-width="1" /><clipPath id="fclip"><rect x="64" y="200" width="217" height="126"/></clipPath><g clip-path="url(#fclip)"><line x1="69.5" y1="253" x2="39.0" y2="312.5" stroke="#fff" stroke-width="1" /><line x1="69.5" y1="253" x2="43.1" y2="312.5" stroke="#fff" stroke-width="1" /><line x1="69.5" y1="253" x2="54.2" y2="312.5" stroke="#fff" stroke-width="1" /><line x1="69.5" y1="253" x2="54.3" y2="312.5" stroke="#fff" stroke-width="1" /><line x1="69.5" y1="253" x2="69.5" y2="312.5" stroke="#fff" stroke-width="1" /><line x1="69.5" y1="253" x2="84.8" y2="312.5" stroke="#fff" stroke-width="1" /><line x1="69.5" y1="253" x2="95.9" y2="312.5" stroke="#fff" stroke-width="1" /><line x1="69.5" y1="253" x2="100.0" y2="312.5" stroke="#fff" stroke-width="1" /><line x1="39.0" y1="312.5" x2="100.0" y2="312.5" stroke="#fff" stroke-width="1" /><polygon points="69.5,252 68.0,257 71.0,257" fill="#fff" stroke="none" stroke-width="1" /></g><line x1="69" y1="283.5" x2="158" y2="283.5" stroke="#b070c0" stroke-width="1" /><line x1="66.0" y1="280.0" x2="73.0" y2="287.0" stroke="#ff2222" stroke-width="1.6" shape-rendering="geometricPrecision"/><line x1="66.0" y1="287.0" x2="73.0" y2="280.0" stroke="#ff2222" stroke-width="1.6" shape-rendering="geometricPrecision"/><rect x="68.0" y="282.0" width="3" height="3" fill="#fff" /><rect x="109.0" y="281.0" width="5" height="5" fill="#ff0000" /><rect x="156.0" y="281.0" width="5" height="5" fill="#ff0000" /><rect x="68" y="298" width="30" height="23" fill="#000" /><rect x="68.5" y="298.5" width="29" height="22" fill="none" stroke="#aaaaaa" stroke-width="1"/><line x1="77.5" y1="307" x2="77.5" y2="315.5" stroke="#dddddd" stroke-width="1" /><line x1="77.5" y1="315.5" x2="86" y2="315.5" stroke="#dddddd" stroke-width="1" /><line x1="77.5" y1="315.5" x2="82.5" y2="310.5" stroke="#dddddd" stroke-width="1" /><text x="73.3" y="306.2" font-family='"Liberation Sans", sans-serif' font-size="7.5" font-weight="normal" fill="#ff6699" text-anchor="middle" textLength="5" lengthAdjust="spacingAndGlyphs" stroke="#ff6699" stroke-width="0.4">Z</text><text x="86.8" y="309.2" font-family='"Liberation Sans", sans-serif' font-size="7.5" font-weight="normal" fill="#ccee33" text-anchor="middle" textLength="5" lengthAdjust="spacingAndGlyphs" stroke="#ccee33" stroke-width="0.4">Y</text><text x="90.2" y="319.2" font-family='"Liberation Sans", sans-serif' font-size="7.5" font-weight="normal" fill="#33ddbb" text-anchor="middle" textLength="5" lengthAdjust="spacingAndGlyphs" stroke="#33ddbb" stroke-width="0.4">X</text><rect x="268" y="313" width="14" height="14" fill="#fff" /></svg></div>
<div class="win view" style="left:287px;top:183px;width:224px;height:144px"><svg width="224" height="144" viewBox="287 183 224 144" shape-rendering="crispEdges"><rect x="287" y="183" width="224" height="144" fill="#fff" /><rect x="288" y="200" width="222" height="126" fill="#000" /><rect x="287" y="183" width="224" height="17" fill="#ffffff" /><text x="399.0" y="196" font-family='"Liberation Sans", sans-serif' font-size="12" font-weight="bold" fill="#858585" text-anchor="middle" textLength="68" lengthAdjust="spacingAndGlyphs" >Right View</text><polyline points="415.48,270.74 414.95,270.74 413.49,270.74 411.5,270.74 409.51,270.74 408.05,270.74 407.52,270.74 408.05,270.74 409.51,270.74 411.5,270.74 413.49,270.74 414.95,270.74 415.48,270.74" fill="none" stroke="#fff" stroke-width="1" /><polyline points="423.17,268.68 421.61,268.68 417.34,268.68 411.5,268.68 405.66,268.68 401.39,268.68 399.83,268.68 401.39,268.68 405.66,268.68 411.5,268.68 417.34,268.68 421.61,268.68 423.17,268.68" fill="none" stroke="#fff" stroke-width="1" /><polyline points="430.07,264.7 427.58,264.7 420.78,264.7 411.5,264.7 402.22,264.7 395.42,264.7 392.93,264.7 395.42,264.7 402.22,264.7 411.5,264.7 420.78,264.7 427.58,264.7 430.07,264.7" fill="none" stroke="#fff" stroke-width="1" /><polyline points="435.7,259.07 432.46,259.07 423.6,259.07 411.5,259.07 399.4,259.07 390.54,259.07 387.3,259.07 390.54,259.07 399.4,259.07 411.5,259.07 423.6,259.07 432.46,259.07 435.7,259.07" fill="none" stroke="#fff" stroke-width="1" /><polyline points="439.68,252.17 435.9,252.17 425.59,252.17 411.5,252.17 397.41,252.17 387.1,252.17 383.32,252.17 387.1,252.17 397.41,252.17 411.5,252.17 425.59,252.17 435.9,252.17 439.68,252.17" fill="none" stroke="#fff" stroke-width="1" /><polyline points="441.74,244.48 437.69,244.48 426.62,244.48 411.5,244.48 396.38,244.48 385.31,244.48 381.26,244.48 385.31,244.48 396.38,244.48 411.5,244.48 426.62,244.48 437.69,244.48 441.74,244.48" fill="none" stroke="#fff" stroke-width="1" /><polyline points="441.74,236.52 437.69,236.52 426.62,236.52 411.5,236.52 396.38,236.52 385.31,236.52 381.26,236.52 385.31,236.52 396.38,236.52 411.5,236.52 426.62,236.52 437.69,236.52 441.74,236.52" fill="none" stroke="#fff" stroke-width="1" /><polyline points="439.68,228.83 435.9,228.83 425.59,228.83 411.5,228.83 397.41,228.83 387.1,228.83 383.32,228.83 387.1,228.83 397.41,228.83 411.5,228.83 425.59,228.83 435.9,228.83 439.68,228.83" fill="none" stroke="#fff" stroke-width="1" /><polyline points="435.7,221.93 432.46,221.93 423.6,221.93 411.5,221.93 399.4,221.93 390.54,221.93 387.3,221.93 390.54,221.93 399.4,221.93 411.5,221.93 423.6,221.93 432.46,221.93 435.7,221.93" fill="none" stroke="#fff" stroke-width="1" /><polyline points="430.07,216.3 427.58,216.3 420.78,216.3 411.5,216.3 402.22,216.3 395.42,216.3 392.93,216.3 395.42,216.3 402.22,216.3 411.5,216.3 420.78,216.3 427.58,216.3 430.07,216.3" fill="none" stroke="#fff" stroke-width="1" /><polyline points="423.17,212.32 421.61,212.32 417.34,212.32 411.5,212.32 405.66,212.32 401.39,212.32 399.83,212.32 401.39,212.32 405.66,212.32 411.5,212.32 417.34,212.32 421.61,212.32 423.17,212.32" fill="none" stroke="#fff" stroke-width="1" /><polyline points="415.48,210.26 414.95,210.26 413.49,210.26 411.5,210.26 409.51,210.26 408.05,210.26 407.52,210.26 408.05,210.26 409.51,210.26 411.5,210.26 413.49,210.26 414.95,210.26 415.48,210.26" fill="none" stroke="#fff" stroke-width="1" /><polyline points="411.5,271.0 415.48,270.74 423.17,268.68 430.07,264.7 435.7,259.07 439.68,252.17 441.74,244.48 441.74,236.52 439.68,228.83 435.7,221.93 430.07,216.3 423.17,212.32 415.48,210.26 411.5,210.0" fill="none" stroke="#fff" stroke-width="1" /><polyline points="411.5,271.0 414.95,270.74 421.61,268.68 427.58,264.7 432.46,259.07 435.9,252.17 437.69,244.48 437.69,236.52 435.9,228.83 432.46,221.93 427.58,216.3 421.61,212.32 414.95,210.26 411.5,210.0" fill="none" stroke="#fff" stroke-width="1" /><polyline points="411.5,271.0 413.49,270.74 417.34,268.68 420.78,264.7 423.6,259.07 425.59,252.17 426.62,244.48 426.62,236.52 425.59,228.83 423.6,221.93 420.78,216.3 417.34,212.32 413.49,210.26 411.5,210.0" fill="none" stroke="#fff" stroke-width="1" /><polyline points="411.5,271.0 411.5,270.74 411.5,268.68 411.5,264.7 411.5,259.07 411.5,252.17 411.5,244.48 411.5,236.52 411.5,228.83 411.5,221.93 411.5,216.3 411.5,212.32 411.5,210.26 411.5,210.0" fill="none" stroke="#fff" stroke-width="1" /><polyline points="411.5,271.0 409.51,270.74 405.66,268.68 402.22,264.7 399.4,259.07 397.41,252.17 396.38,244.48 396.38,236.52 397.41,228.83 399.4,221.93 402.22,216.3 405.66,212.32 409.51,210.26 411.5,210.0" fill="none" stroke="#fff" stroke-width="1" /><polyline points="411.5,271.0 408.05,270.74 401.39,268.68 395.42,264.7 390.54,259.07 387.1,252.17 385.31,244.48 385.31,236.52 387.1,228.83 390.54,221.93 395.42,216.3 401.39,212.32 408.05,210.26 411.5,210.0" fill="none" stroke="#fff" stroke-width="1" /><polyline points="411.5,271.0 407.52,270.74 399.83,268.68 392.93,264.7 387.3,259.07 383.32,252.17 381.26,244.48 381.26,236.52 383.32,228.83 387.3,221.93 392.93,216.3 399.83,212.32 407.52,210.26 411.5,210.0" fill="none" stroke="#fff" stroke-width="1" /><polyline points="411.5,271.0 408.05,270.74 401.39,268.68 395.42,264.7 390.54,259.07 387.1,252.17 385.31,244.48 385.31,236.52 387.1,228.83 390.54,221.93 395.42,216.3 401.39,212.32 408.05,210.26 411.5,210.0" fill="none" stroke="#fff" stroke-width="1" /><polyline points="411.5,271.0 409.51,270.74 405.66,268.68 402.22,264.7 399.4,259.07 397.41,252.17 396.38,244.48 396.38,236.52 397.41,228.83 399.4,221.93 402.22,216.3 405.66,212.32 409.51,210.26 411.5,210.0" fill="none" stroke="#fff" stroke-width="1" /><polyline points="411.5,271.0 411.5,270.74 411.5,268.68 411.5,264.7 411.5,259.07 411.5,252.17 411.5,244.48 411.5,236.52 411.5,228.83 411.5,221.93 411.5,216.3 411.5,212.32 411.5,210.26 411.5,210.0" fill="none" stroke="#fff" stroke-width="1" /><polyline points="411.5,271.0 413.49,270.74 417.34,268.68 420.78,264.7 423.6,259.07 425.59,252.17 426.62,244.48 426.62,236.52 425.59,228.83 423.6,221.93 420.78,216.3 417.34,212.32 413.49,210.26 411.5,210.0" fill="none" stroke="#fff" stroke-width="1" /><polyline points="411.5,271.0 414.95,270.74 421.61,268.68 427.58,264.7 432.46,259.07 435.9,252.17 437.69,244.48 437.69,236.52 435.9,228.83 432.46,221.93 427.58,216.3 421.61,212.32 414.95,210.26 411.5,210.0" fill="none" stroke="#fff" stroke-width="1" /><line x1="373.5" y1="252" x2="343.0" y2="311.5" stroke="#fff" stroke-width="1" /><line x1="373.5" y1="252" x2="347.1" y2="311.5" stroke="#fff" stroke-width="1" /><line x1="373.5" y1="252" x2="358.2" y2="311.5" stroke="#fff" stroke-width="1" /><line x1="373.5" y1="252" x2="373.5" y2="311.5" stroke="#fff" stroke-width="1" /><line x1="373.5" y1="252" x2="388.8" y2="311.5" stroke="#fff" stroke-width="1" /><line x1="373.5" y1="252" x2="399.9" y2="311.5" stroke="#fff" stroke-width="1" /><line x1="373.5" y1="252" x2="404.0" y2="311.5" stroke="#fff" stroke-width="1" /><line x1="343.0" y1="311.5" x2="404.0" y2="311.5" stroke="#fff" stroke-width="1" /><polygon points="373.5,251 372.0,256 375.0,256" fill="#fff" stroke="none" stroke-width="1" /><line x1="374" y1="281.5" x2="425" y2="281.5" stroke="#b070c0" stroke-width="1" /><line x1="370.0" y1="278.0" x2="377.0" y2="285.0" stroke="#ff2222" stroke-width="1.6" shape-rendering="geometricPrecision"/><line x1="370.0" y1="285.0" x2="377.0" y2="278.0" stroke="#ff2222" stroke-width="1.6" shape-rendering="geometricPrecision"/><rect x="372.0" y="280.0" width="3" height="3" fill="#fff" /><rect x="382.0" y="279.0" width="5" height="5" fill="#ff0000" /><rect x="423.0" y="279.0" width="5" height="5" fill="#ff0000" /><rect x="292" y="298" width="30" height="23" fill="#000" /><rect x="292.5" y="298.5" width="29" height="22" fill="none" stroke="#aaaaaa" stroke-width="1"/><line x1="305.5" y1="304" x2="305.5" y2="313" stroke="#dddddd" stroke-width="1" /><line x1="305.5" y1="312.5" x2="313" y2="312.5" stroke="#dddddd" stroke-width="1" /><line x1="305.5" y1="312.5" x2="301" y2="316.5" stroke="#dddddd" stroke-width="1" /><text x="300.5" y="306.3" font-family='"Liberation Sans", sans-serif' font-size="7.5" font-weight="normal" fill="#ff6699" text-anchor="middle" textLength="5" lengthAdjust="spacingAndGlyphs" stroke="#ff6699" stroke-width="0.4">Z</text><text x="316.5" y="315.7" font-family='"Liberation Sans", sans-serif' font-size="7.5" font-weight="normal" fill="#ccee33" text-anchor="middle" textLength="5" lengthAdjust="spacingAndGlyphs" stroke="#ccee33" stroke-width="0.4">Y</text><text x="297.5" y="319.4" font-family='"Liberation Sans", sans-serif' font-size="7.5" font-weight="normal" fill="#33ddbb" text-anchor="middle" textLength="5" lengthAdjust="spacingAndGlyphs" stroke="#33ddbb" stroke-width="0.4">X</text><rect x="497" y="313" width="14" height="14" fill="#fff" /></svg></div>
<div class="win timeline" style="left:6px;top:329px;width:505px;height:161px"><svg width="505" height="161" viewBox="6 329 505 161" shape-rendering="crispEdges"><rect x="6" y="329" width="505" height="161" fill="#fff" /><rect x="6" y="329" width="505" height="17" fill="#ffffff" /><text x="258.5" y="342" font-family='"Liberation Sans", sans-serif' font-size="12" font-weight="bold" fill="#858585" text-anchor="middle" textLength="53" lengthAdjust="spacingAndGlyphs" >Untitled</text><rect x="6" y="346" width="505" height="1" fill="#000" /><rect x="6" y="347" width="153" height="45" fill="#eeeeee" /><rect x="46" y="351" width="71" height="17" fill="#fff" /><rect x="46.5" y="351.5" width="70" height="16" fill="none" stroke="#000" stroke-width="1"/><text x="54.17,61.46,65.97,71.87,79.16,83.67,89.57,96.86,101.37,107.27" y="363" font-family='"Liberation Sans", sans-serif' font-size="10" fill="#000">0:00:01.00</text><rect x="9" y="371" width="34" height="19" fill="#dddddd" /><rect x="9.5" y="371.5" width="33" height="18" fill="none" stroke="#000" stroke-width="1"/><rect x="10" y="372" width="32" height="1" fill="#fff" /><rect x="10" y="372" width="1" height="17" fill="#fff" /><rect x="10" y="388" width="32" height="1" fill="#888" /><rect x="41" y="372" width="1" height="17" fill="#888" /><rect x="22" y="374" width="8" height="7" fill="#9999ff" /><rect x="22.5" y="374.5" width="7" height="6" fill="none" stroke="#5555cc" stroke-width="1"/><text x="26.5" y="388" font-family='"Liberation Sans", sans-serif' font-size="7" font-weight="normal" fill="#000" text-anchor="middle" textLength="15" lengthAdjust="spacingAndGlyphs" stroke="#000" stroke-width="0.35">STOP</text><rect x="46" y="371" width="34" height="19" fill="#dddddd" /><rect x="46.5" y="371.5" width="33" height="18" fill="none" stroke="#000" stroke-width="1"/><rect x="47" y="372" width="32" height="1" fill="#fff" /><rect x="47" y="372" width="1" height="17" fill="#fff" /><rect x="47" y="388" width="32" height="1" fill="#888" /><rect x="78" y="372" width="1" height="17" fill="#888" /><rect x="49" y="374" width="3" height="1" fill="#4444bb" /><rect x="53" y="374" width="2" height="1" fill="#4444bb" /><rect x="49" y="376" width="3" height="1" fill="#4444bb" /><rect x="53" y="376" width="2" height="1" fill="#4444bb" /><rect x="49" y="378" width="3" height="1" fill="#4444bb" /><rect x="53" y="378" width="2" height="1" fill="#4444bb" /><rect x="49" y="380" width="3" height="1" fill="#4444bb" /><rect x="53" y="380" width="2" height="1" fill="#4444bb" /><rect x="60.5" y="373.5" width="6" height="6" fill="#dddddd" stroke="#4444bb" stroke-width="1"/><rect x="58.5" y="375.5" width="6" height="6" fill="#dddddd" stroke="#4444bb" stroke-width="1"/><rect x="70.5" y="373.5" width="6" height="6" fill="#dddddd" stroke="#4444bb" stroke-width="1"/><rect x="68.5" y="375.5" width="6" height="6" fill="#dddddd" stroke="#4444bb" stroke-width="1"/><text x="63.5" y="388" font-family='"Liberation Sans", sans-serif' font-size="7" font-weight="normal" fill="#000" text-anchor="middle" textLength="27" lengthAdjust="spacingAndGlyphs" stroke="#000" stroke-width="0.35">PREVIEW</text><rect x="83" y="371" width="34" height="19" fill="#dddddd" /><rect x="83.5" y="371.5" width="33" height="18" fill="none" stroke="#000" stroke-width="1"/><rect x="84" y="372" width="32" height="1" fill="#fff" /><rect x="84" y="372" width="1" height="17" fill="#fff" /><rect x="84" y="388" width="32" height="1" fill="#888" /><rect x="115" y="372" width="1" height="17" fill="#888" /><rect x="86" y="374" width="3" height="1" fill="#4444bb" /><rect x="90" y="374" width="2" height="1" fill="#4444bb" /><rect x="86" y="376" width="3" height="1" fill="#4444bb" /><rect x="90" y="376" width="2" height="1" fill="#4444bb" /><rect x="86" y="378" width="3" height="1" fill="#4444bb" /><rect x="90" y="378" width="2" height="1" fill="#4444bb" /><rect x="86" y="380" width="3" height="1" fill="#4444bb" /><rect x="90" y="380" width="2" height="1" fill="#4444bb" /><g shape-rendering="geometricPrecision" stroke="#4444bb" stroke-width="1" fill="none"><circle cx="99.5" cy="374" r="1.1" fill="#4444bb"/><polyline points="99.5,375.5 98.5,378 96,381.5" fill="none" stroke="#4444bb" stroke-width="1" /><polyline points="98.5,378 101.5,379 101,381.5" fill="none" stroke="#4444bb" stroke-width="1" /><polyline points="95.5,377.5 99,376 103,377.5" fill="none" stroke="#4444bb" stroke-width="1" /></g><g shape-rendering="geometricPrecision" stroke="#4444bb" stroke-width="1" fill="none"><circle cx="109.5" cy="374" r="1.1" fill="#4444bb"/><polyline points="109.5,375.5 108.5,378 106,381.5" fill="none" stroke="#4444bb" stroke-width="1" /><polyline points="108.5,378 111.5,379 111,381.5" fill="none" stroke="#4444bb" stroke-width="1" /><polyline points="105.5,377.5 109,376 113,377.5" fill="none" stroke="#4444bb" stroke-width="1" /></g><text x="100.5" y="388" font-family='"Liberation Sans", sans-serif' font-size="7" font-weight="normal" fill="#000" text-anchor="middle" textLength="27" lengthAdjust="spacingAndGlyphs" stroke="#000" stroke-width="0.35">ANIMATE</text><rect x="120" y="371" width="34" height="19" fill="#dddddd" /><rect x="120.5" y="371.5" width="33" height="18" fill="none" stroke="#000" stroke-width="1"/><rect x="121" y="372" width="32" height="1" fill="#fff" /><rect x="121" y="372" width="1" height="17" fill="#fff" /><rect x="121" y="388" width="32" height="1" fill="#888" /><rect x="152" y="372" width="1" height="17" fill="#888" /><rect x="127" y="373" width="20" height="9" fill="#7777ee" /><rect x="127" y="373" width="20" height="2" fill="#4444bb" /><rect x="127" y="380" width="20" height="2" fill="#4444bb" /><rect x="128" y="373.5" width="1.5" height="1" fill="#dddddd" /><rect x="128" y="380.5" width="1.5" height="1" fill="#dddddd" /><rect x="131" y="373.5" width="1.5" height="1" fill="#dddddd" /><rect x="131" y="380.5" width="1.5" height="1" fill="#dddddd" /><rect x="134" y="373.5" width="1.5" height="1" fill="#dddddd" /><rect x="134" y="380.5" width="1.5" height="1" fill="#dddddd" /><rect x="137" y="373.5" width="1.5" height="1" fill="#dddddd" /><rect x="137" y="380.5" width="1.5" height="1" fill="#dddddd" /><rect x="140" y="373.5" width="1.5" height="1" fill="#dddddd" /><rect x="140" y="380.5" width="1.5" height="1" fill="#dddddd" /><rect x="143" y="373.5" width="1.5" height="1" fill="#dddddd" /><rect x="143" y="380.5" width="1.5" height="1" fill="#dddddd" /><rect x="146" y="373.5" width="1.5" height="1" fill="#dddddd" /><rect x="146" y="380.5" width="1.5" height="1" fill="#dddddd" /><text x="137.5" y="388" font-family='"Liberation Sans", sans-serif' font-size="7" font-weight="normal" fill="#000" text-anchor="middle" textLength="19" lengthAdjust="spacingAndGlyphs" stroke="#000" stroke-width="0.35">SPOOL</text><rect x="6" y="392" width="505" height="1" fill="#000" /><rect x="6" y="393" width="153" height="14" fill="#eeeeee" /><text x="8" y="403.5" font-family='"Liberation Sans", sans-serif' font-size="10" font-weight="normal" fill="#000" text-anchor="start" textLength="55" lengthAdjust="spacingAndGlyphs" >Object Name</text><rect x="6" y="407" width="505" height="1" fill="#000" /><rect x="22" y="421" width="137" height="1" fill="#999999" /><text x="21.8" y="419.6" font-family='"Liberation Sans", sans-serif' font-size="10" font-weight="normal" fill="#000" text-anchor="start" textLength="33.5" lengthAdjust="spacingAndGlyphs" >Camera</text><rect x="22" y="436" width="137" height="1" fill="#999999" /><rect x="21" y="427" width="23" height="10" fill="#000" /><text x="21.8" y="434.6" font-family='"Liberation Sans", sans-serif' font-size="10" font-weight="normal" fill="#fff" text-anchor="start" textLength="21.5" lengthAdjust="spacingAndGlyphs" >Light</text><rect x="21" y="436" width="23" height="1" fill="#ee6666" /><rect x="22" y="451" width="137" height="1" fill="#999999" /><text x="21.8" y="449.6" font-family='"Liberation Sans", sans-serif' font-size="10" font-weight="normal" fill="#000" text-anchor="start" textLength="30.5" lengthAdjust="spacingAndGlyphs" >Sphere</text><rect x="22" y="466" width="137" height="1" fill="#999999" /><text x="21.8" y="464.6" font-family='"Liberation Sans", sans-serif' font-size="10" font-weight="normal" fill="#000" text-anchor="start" textLength="20.5" lengthAdjust="spacingAndGlyphs" >Cone</text><rect x="6" y="474" width="505" height="1" fill="#000" /><rect x="6" y="475" width="153" height="14" fill="#eeeeee" /><rect x="20" y="475" width="1" height="14" fill="#000" /><rect x="144" y="475" width="1" height="14" fill="#000" /><polygon points="8.5,482 13.5,477 13.5,480 17.5,480 17.5,484 13.5,484 13.5,487" fill="#fff" stroke="#555" stroke-width="0.9" shape-rendering="geometricPrecision"/><polygon points="156.5,482 151.5,477 151.5,480 147.5,480 147.5,484 151.5,484 151.5,487" fill="#fff" stroke="#555" stroke-width="0.9" shape-rendering="geometricPrecision"/><rect x="6" y="489" width="505" height="1" fill="#000" /><rect x="159" y="347" width="3" height="143" fill="#000" /><rect x="160" y="347" width="1" height="127" fill="#cccccc" /><rect x="162" y="347" width="334" height="14" fill="#eeeeee" /><rect x="162" y="361" width="349" height="1" fill="#000" /><rect x="162" y="362" width="334" height="1" fill="#000" /><rect x="181" y="351" width="193" height="6" fill="#fff" /><rect x="181" y="351" width="194" height="1" fill="#000" /><rect x="181" y="356" width="194" height="1" fill="#000" /><rect x="181" y="354" width="194" height="1" fill="#bbbbbb" /><rect x="181" y="355" width="194" height="1" fill="#888888" /><polygon points="175.5,349.5 181.5,349.5 181.5,359.5 175.5,353.5" fill="#eeeeee" stroke="#000" stroke-width="1" shape-rendering="geometricPrecision"/><polygon points="374.5,349.5 380.5,349.5 380.5,353.5 374.5,359.5" fill="#eeeeee" stroke="#000" stroke-width="1" shape-rendering="geometricPrecision"/><text x="167.12,173.12,180.51,185.12,191.12" y="380" font-family='"Liberation Sans", sans-serif' font-size="10" fill="#000">00.00</text><text x="215.12,221.12,228.51,233.12,239.12" y="380" font-family='"Liberation Sans", sans-serif' font-size="10" fill="#000">00.07</text><text x="263.12,269.12,276.51,281.12,287.12" y="380" font-family='"Liberation Sans", sans-serif' font-size="10" fill="#000">00.15</text><text x="311.12,317.12,324.51,329.12,335.12" y="380" font-family='"Liberation Sans", sans-serif' font-size="10" fill="#000">00.22</text><text x="359.12,365.12,372.51,377.12,383.12" y="380" font-family='"Liberation Sans", sans-serif' font-size="10" fill="#000">01.00</text><text x="407.12,413.12,420.51,425.12,431.12" y="380" font-family='"Liberation Sans", sans-serif' font-size="10" fill="#000">01.07</text><text x="455.12,461.12,468.51,473.12,479.12" y="380" font-family='"Liberation Sans", sans-serif' font-size="10" fill="#000">01.15</text><rect x="182" y="389" width="1" height="3" fill="#000" /><rect x="194" y="389" width="1" height="3" fill="#000" /><rect x="206" y="389" width="1" height="3" fill="#000" /><rect x="218" y="389" width="1" height="3" fill="#000" /><rect x="230" y="389" width="1" height="3" fill="#000" /><rect x="242" y="389" width="1" height="3" fill="#000" /><rect x="254" y="389" width="1" height="3" fill="#000" /><rect x="266" y="389" width="1" height="3" fill="#000" /><rect x="278" y="389" width="1" height="3" fill="#000" /><rect x="290" y="389" width="1" height="3" fill="#000" /><rect x="302" y="389" width="1" height="3" fill="#000" /><rect x="314" y="389" width="1" height="3" fill="#000" /><rect x="326" y="389" width="1" height="3" fill="#000" /><rect x="338" y="389" width="1" height="3" fill="#000" /><rect x="350" y="389" width="1" height="3" fill="#000" /><rect x="362" y="389" width="1" height="3" fill="#000" /><rect x="374" y="389" width="1" height="3" fill="#000" /><rect x="386" y="389" width="1" height="3" fill="#000" /><rect x="398" y="389" width="1" height="3" fill="#000" /><rect x="410" y="389" width="1" height="3" fill="#000" /><rect x="422" y="389" width="1" height="3" fill="#000" /><rect x="434" y="389" width="1" height="3" fill="#000" /><rect x="446" y="389" width="1" height="3" fill="#000" /><rect x="458" y="389" width="1" height="3" fill="#000" /><rect x="470" y="389" width="1" height="3" fill="#000" /><rect x="482" y="389" width="1" height="3" fill="#000" /><rect x="494" y="389" width="1" height="3" fill="#000" /><polygon points="182.5,387.5 178.5,392 186.5,392" fill="#000" stroke="none" stroke-width="1" shape-rendering="geometricPrecision"/><polygon points="374.5,387.5 370.5,392 378.5,392" fill="#000" stroke="none" stroke-width="1" shape-rendering="geometricPrecision"/><rect x="162" y="393" width="334" height="14" fill="#eeeeee" /><rect x="162" y="417" width="20" height="2" fill="#000" /><rect x="182" y="415" width="314" height="6" fill="#fff" /><rect x="182" y="415" width="314" height="1" fill="#000" /><rect x="182" y="420" width="314" height="1" fill="#000" /><rect x="182" y="418" width="314" height="1" fill="#dddddd" /><rect x="182" y="419" width="314" height="1" fill="#aaaaaa" /><rect x="230" y="416" width="1" height="4" fill="#ee9944" /><rect x="278" y="416" width="1" height="4" fill="#ee9944" /><rect x="326" y="416" width="1" height="4" fill="#ee9944" /><rect x="422" y="416" width="1" height="4" fill="#ee9944" /><rect x="470" y="416" width="1" height="4" fill="#ee9944" /><rect x="162" y="432" width="20" height="2" fill="#000" /><rect x="182" y="430" width="314" height="6" fill="#fff" /><rect x="182" y="430" width="314" height="1" fill="#000" /><rect x="182" y="435" width="314" height="1" fill="#000" /><rect x="182" y="433" width="314" height="1" fill="#dddddd" /><rect x="182" y="434" width="314" height="1" fill="#aaaaaa" /><rect x="230" y="431" width="1" height="4" fill="#ee9944" /><rect x="278" y="431" width="1" height="4" fill="#ee9944" /><rect x="326" y="431" width="1" height="4" fill="#ee9944" /><rect x="422" y="431" width="1" height="4" fill="#ee9944" /><rect x="470" y="431" width="1" height="4" fill="#ee9944" /><rect x="162" y="447" width="20" height="2" fill="#000" /><rect x="182" y="445" width="314" height="6" fill="#fff" /><rect x="182" y="445" width="314" height="1" fill="#000" /><rect x="182" y="450" width="314" height="1" fill="#000" /><rect x="182" y="448" width="314" height="1" fill="#dddddd" /><rect x="182" y="449" width="314" height="1" fill="#aaaaaa" /><rect x="230" y="446" width="1" height="4" fill="#ee9944" /><rect x="278" y="446" width="1" height="4" fill="#ee9944" /><rect x="326" y="446" width="1" height="4" fill="#ee9944" /><rect x="422" y="446" width="1" height="4" fill="#ee9944" /><rect x="470" y="446" width="1" height="4" fill="#ee9944" /><rect x="162" y="462" width="20" height="2" fill="#000" /><rect x="182" y="460" width="314" height="6" fill="#fff" /><rect x="182" y="460" width="314" height="1" fill="#000" /><rect x="182" y="465" width="314" height="1" fill="#000" /><rect x="374" y="463" width="122" height="1" fill="#dddddd" /><rect x="374" y="464" width="122" height="1" fill="#aaaaaa" /><rect x="182" y="461" width="192" height="4" fill="#5555cc" /><rect x="182" y="461" width="193" height="1" fill="#9999ee" /><rect x="182" y="464" width="193" height="1" fill="#333399" /><rect x="230" y="461" width="1" height="4" fill="#ee9944" /><rect x="278" y="461" width="1" height="4" fill="#ee9944" /><rect x="326" y="461" width="1" height="4" fill="#ee9944" /><rect x="422" y="461" width="1" height="4" fill="#ee9944" /><rect x="470" y="461" width="1" height="4" fill="#ee9944" /><rect x="374" y="408" width="1" height="66" fill="#ee0000" /><rect x="179" y="412" width="7" height="12" rx="3.2" ry="3.5" fill="#dddddd" stroke="#000" stroke-width="1" shape-rendering="geometricPrecision"/><rect x="181" y="414" width="1" height="8" fill="#fff" /><rect x="183" y="414" width="1" height="8" fill="#999" /><rect x="179" y="427" width="7" height="12" rx="3.2" ry="3.5" fill="#dddddd" stroke="#000" stroke-width="1" shape-rendering="geometricPrecision"/><rect x="181" y="429" width="1" height="8" fill="#fff" /><rect x="183" y="429" width="1" height="8" fill="#999" /><rect x="179" y="442" width="7" height="12" rx="3.2" ry="3.5" fill="#dddddd" stroke="#000" stroke-width="1" shape-rendering="geometricPrecision"/><rect x="181" y="444" width="1" height="8" fill="#fff" /><rect x="183" y="444" width="1" height="8" fill="#999" /><rect x="179" y="457" width="7" height="12" rx="3.2" ry="3.5" fill="#dddddd" stroke="#000" stroke-width="1" shape-rendering="geometricPrecision"/><rect x="181" y="459" width="1" height="8" fill="#fff" /><rect x="183" y="459" width="1" height="8" fill="#999" /><rect x="275" y="457" width="7" height="12" rx="3.2" ry="3.5" fill="#dddddd" stroke="#000" stroke-width="1" shape-rendering="geometricPrecision"/><rect x="277" y="459" width="1" height="8" fill="#fff" /><rect x="279" y="459" width="1" height="8" fill="#999" /><rect x="371" y="457" width="7" height="12" rx="3.2" ry="3.5" fill="#dddddd" stroke="#000" stroke-width="1" shape-rendering="geometricPrecision"/><rect x="373" y="459" width="1" height="8" fill="#fff" /><rect x="375" y="459" width="1" height="8" fill="#999" /><polygon points="369.5,392.5 379.5,392.5 379.5,403 374.5,409 369.5,403" fill="#eeeeee" stroke="#000" stroke-width="1" shape-rendering="geometricPrecision"/><rect x="374" y="395" width="1" height="7" fill="#000" /><rect x="162" y="475" width="334" height="14" fill="#eeeeee" /><rect x="178" y="475" width="1" height="14" fill="#000" /><rect x="481" y="475" width="1" height="14" fill="#000" /><polygon points="166.5,482 171.5,477 171.5,480 175.5,480 175.5,484 171.5,484 171.5,487" fill="#fff" stroke="#555" stroke-width="0.9" shape-rendering="geometricPrecision"/><polygon points="493.5,482 488.5,477 488.5,480 484.5,480 484.5,484 488.5,484 488.5,487" fill="#fff" stroke="#555" stroke-width="0.9" shape-rendering="geometricPrecision"/><rect x="496" y="347" width="1" height="143" fill="#000" /><rect x="497" y="347" width="14" height="127" fill="#eeeeee" /><rect x="497" y="347" width="14" height="13" fill="#dddddd" /><rect x="497" y="347" width="14" height="1" fill="#fff" /><rect x="497" y="347" width="1" height="13" fill="#fff" /><rect x="498" y="359" width="13" height="1" fill="#999" /><rect x="510" y="348" width="1" height="12" fill="#999" /><rect x="500" y="352" width="9" height="2" fill="#333366" /><rect x="503.5" y="348.5" width="2" height="9" fill="#333366" /><rect x="497" y="360" width="14" height="3" fill="#000" /><rect x="498" y="364" width="12" height="13" fill="#ddddff" /><rect x="498" y="364" width="2" height="13" fill="#333366" /><rect x="508" y="364" width="2" height="13" fill="#333366" /><rect x="498" y="364" width="12" height="1" fill="#333366" /><rect x="498" y="376" width="12" height="1" fill="#333366" /><polygon points="500,365 508,365 504,370.5" fill="#9999dd" stroke="#333366" stroke-width="0.8" shape-rendering="geometricPrecision"/><polygon points="500,376 508,376 504,370.5" fill="#ccccff" stroke="#333366" stroke-width="0.8" shape-rendering="geometricPrecision"/><rect x="497" y="378" width="14" height="2" fill="#000" /><rect x="497" y="380" width="14" height="12" fill="#dddddd" /><rect x="497" y="380" width="14" height="1" fill="#fff" /><rect x="497" y="380" width="1" height="12" fill="#fff" /><rect x="498" y="391" width="13" height="1" fill="#999" /><rect x="510" y="381" width="1" height="11" fill="#999" /><rect x="500" y="385" width="8" height="2" fill="#333366" /><rect x="496" y="393" width="15" height="14" fill="#eeeeee" /><rect x="497" y="408" width="14" height="66" fill="#eeeeee" /><rect x="497" y="422" width="14" height="1" fill="#000" /><rect x="497" y="459" width="14" height="1" fill="#000" /><polygon points="504,410.5 499,415.5 502,415.5 502,419.5 506,419.5 506,415.5 509,415.5" fill="#fff" stroke="#555" stroke-width="0.9" shape-rendering="geometricPrecision"/><polygon points="504,471.5 499,466.5 502,466.5 502,462.5 506,462.5 506,466.5 509,466.5" fill="#fff" stroke="#555" stroke-width="0.9" shape-rendering="geometricPrecision"/><rect x="497" y="475" width="14" height="14" fill="#eeeeee" /><rect x="501.5" y="479.5" width="7" height="7" fill="#aaaaaa" stroke="#333366" stroke-width="1"/><rect x="499.5" y="477.5" width="5" height="5" fill="#ccccee" stroke="#333366" stroke-width="1"/></svg></div>
<div class="win palette" style="left:516px;top:24px;width:97px;height:131px"><svg width="97" height="131" viewBox="516 24 97 131" shape-rendering="crispEdges"><defs><pattern id="dots" width="2" height="2" patternUnits="userSpaceOnUse"><rect x="0" y="0" width="1" height="1" fill="#888888"/></pattern></defs><rect x="516" y="24" width="97" height="131" fill="#eeeeee" /><rect x="516" y="24" width="97" height="11" fill="#eeeeee" /><rect x="516" y="24" width="97" height="1" fill="#ccccff" /><rect x="516" y="34" width="97" height="1" fill="#aaaadd" /><rect x="516" y="24" width="1" height="11" fill="#ccccff" /><rect x="612" y="24" width="1" height="11" fill="#aaaadd" /><rect x="518" y="26" width="93" height="8" fill="url(#dots)"/><rect x="522" y="25" width="9" height="9" fill="#eeeeee" /><rect x="523.5" y="26.5" width="6" height="6" fill="#aaaaaa" stroke="#333366" stroke-width="1"/><rect x="524" y="27" width="5" height="1" fill="#ccccdd" /><rect x="524" y="27" width="1" height="5" fill="#ccccdd" /><rect x="516" y="35" width="97" height="1" fill="#000" /><text x="564.5" y="45" font-family='"Liberation Sans", sans-serif' font-size="10" font-weight="normal" fill="#000" text-anchor="middle" textLength="39" lengthAdjust="spacingAndGlyphs" >Top View</text><rect x="520" y="48" width="89" height="8" fill="#fff" /><rect x="520.5" y="48.5" width="88" height="7" fill="none" stroke="#000" stroke-width="1"/><rect x="522" y="61" width="38" height="38" fill="#eeeeee" /><rect x="522.5" y="61.5" width="37" height="37" fill="none" stroke="#000" stroke-width="1"/><rect x="523" y="62" width="36" height="1" fill="#fff" /><rect x="523" y="62" width="1" height="36" fill="#fff" /><rect x="524" y="97" width="35" height="1" fill="#888" /><rect x="558" y="63" width="1" height="35" fill="#888" /><rect x="525" y="64" width="32" height="32" fill="#000" /><clipPath id="wclip"><rect x="525" y="64" width="32" height="22"/></clipPath><g clip-path="url(#wclip)" shape-rendering="geometricPrecision" fill="none" stroke="#bb0000" stroke-width="0.9"><circle cx="541" cy="77" r="12"/><ellipse cx="541" cy="77" rx="4.2" ry="12"/><ellipse cx="541" cy="77" rx="8.8" ry="12"/><line x1="541" y1="65" x2="541" y2="89" stroke="#bb0000" stroke-width="0.9" /><path d="M531.253205655191,70 Q541,73.5 550.746794344809,70"/><path d="M529.1678404338007,75 Q541,78.5 552.8321595661993,75"/><path d="M529.3810499613777,80 Q541,83.5 552.6189500386223,80"/><path d="M531.6325030024024,84.5 Q541,88.0 550.3674969975976,84.5"/><line x1="529" y1="85.5" x2="553" y2="85.5" stroke="#bb0000" stroke-width="0.9" /></g><text x="541" y="94" font-family='"Liberation Sans", sans-serif' font-size="10" font-weight="normal" fill="#fff" text-anchor="middle" textLength="20" lengthAdjust="spacingAndGlyphs" >Wire</text><rect x="568" y="61" width="38" height="38" fill="#eeeeee" /><rect x="568.5" y="61.5" width="37" height="37" fill="none" stroke="#000" stroke-width="1"/><rect x="569" y="62" width="36" height="1" fill="#fff" /><rect x="569" y="62" width="1" height="36" fill="#fff" /><rect x="570" y="97" width="35" height="1" fill="#888" /><rect x="604" y="63" width="1" height="35" fill="#888" /><clipPath id="nclip"><rect x="571" y="64" width="32" height="22"/></clipPath><g clip-path="url(#nclip)" shape-rendering="geometricPrecision"><line x1="532.3142857142857" y1="62" x2="562.3142857142857" y2="90" stroke="#cc1111" stroke-width="1.1" /><line x1="540.8857142857144" y1="62" x2="510.8857142857143" y2="90" stroke="#cc1111" stroke-width="1.1" /><line x1="542.3142857142857" y1="62" x2="572.3142857142857" y2="90" stroke="#cc1111" stroke-width="1.1" /><line x1="550.8857142857144" y1="62" x2="520.8857142857144" y2="90" stroke="#cc1111" stroke-width="1.1" /><line x1="552.3142857142857" y1="62" x2="582.3142857142857" y2="90" stroke="#cc1111" stroke-width="1.1" /><line x1="560.8857142857144" y1="62" x2="530.8857142857144" y2="90" stroke="#cc1111" stroke-width="1.1" /><line x1="562.3142857142857" y1="62" x2="592.3142857142857" y2="90" stroke="#cc1111" stroke-width="1.1" /><line x1="570.8857142857144" y1="62" x2="540.8857142857144" y2="90" stroke="#cc1111" stroke-width="1.1" /><line x1="572.3142857142857" y1="62" x2="602.3142857142857" y2="90" stroke="#cc1111" stroke-width="1.1" /><line x1="580.8857142857144" y1="62" x2="550.8857142857144" y2="90" stroke="#cc1111" stroke-width="1.1" /><line x1="582.3142857142857" y1="62" x2="612.3142857142857" y2="90" stroke="#cc1111" stroke-width="1.1" /><line x1="590.8857142857144" y1="62" x2="560.8857142857144" y2="90" stroke="#cc1111" stroke-width="1.1" /><line x1="592.3142857142857" y1="62" x2="622.3142857142857" y2="90" stroke="#cc1111" stroke-width="1.1" /><line x1="600.8857142857144" y1="62" x2="570.8857142857144" y2="90" stroke="#cc1111" stroke-width="1.1" /><line x1="602.3142857142857" y1="62" x2="632.3142857142857" y2="90" stroke="#cc1111" stroke-width="1.1" /><line x1="610.8857142857144" y1="62" x2="580.8857142857144" y2="90" stroke="#cc1111" stroke-width="1.1" /><line x1="612.3142857142857" y1="62" x2="642.3142857142857" y2="90" stroke="#cc1111" stroke-width="1.1" /><line x1="620.8857142857144" y1="62" x2="590.8857142857144" y2="90" stroke="#cc1111" stroke-width="1.1" /><line x1="622.3142857142857" y1="62" x2="652.3142857142857" y2="90" stroke="#cc1111" stroke-width="1.1" /><line x1="630.8857142857144" y1="62" x2="600.8857142857144" y2="90" stroke="#cc1111" stroke-width="1.1" /><line x1="632.3142857142857" y1="62" x2="662.3142857142857" y2="90" stroke="#cc1111" stroke-width="1.1" /><line x1="640.8857142857144" y1="62" x2="610.8857142857144" y2="90" stroke="#cc1111" stroke-width="1.1" /><circle cx="566.6" cy="66" r="1.2" fill="#cc0000"/><circle cx="561.6" cy="80" r="1.2" fill="#cc0000"/><circle cx="576.6" cy="66" r="1.2" fill="#cc0000"/><circle cx="571.6" cy="80" r="1.2" fill="#cc0000"/><circle cx="586.6" cy="66" r="1.2" fill="#cc0000"/><circle cx="581.6" cy="80" r="1.2" fill="#cc0000"/><circle cx="596.6" cy="66" r="1.2" fill="#cc0000"/><circle cx="591.6" cy="80" r="1.2" fill="#cc0000"/><circle cx="606.6" cy="66" r="1.2" fill="#cc0000"/><circle cx="601.6" cy="80" r="1.2" fill="#cc0000"/><circle cx="616.6" cy="66" r="1.2" fill="#cc0000"/><circle cx="611.6" cy="80" r="1.2" fill="#cc0000"/></g><rect x="571" y="86" width="32" height="10" fill="#000" /><text x="587.5" y="94.5" font-family='"Liberation Sans", sans-serif' font-size="10" font-weight="normal" fill="#fff" text-anchor="middle" textLength="27" lengthAdjust="spacingAndGlyphs" >Norm.</text><rect x="521" y="103" width="88" height="13" fill="#000" /><rect x="520" y="102" width="88" height="13" fill="#fff" /><rect x="520.5" y="102.5" width="87" height="12" fill="none" stroke="#000" stroke-width="1"/><text x="533" y="112.4" font-family='"Liberation Sans", sans-serif' font-size="10" font-weight="normal" fill="#000" text-anchor="start" textLength="37" lengthAdjust="spacingAndGlyphs" >Specular</text><polygon points="594,106 602,106 598,110.5" fill="#000" stroke="none" stroke-width="1" /><rect x="516" y="118" width="97" height="1" fill="#888" /><rect x="516" y="119" width="97" height="1" fill="#fff" /><rect x="521" y="123" width="16" height="14" fill="#000" /><rect x="520" y="122" width="16" height="14" fill="#eeeeee" /><rect x="520.5" y="122.5" width="15" height="13" fill="none" stroke="#000" stroke-width="1"/><rect x="521" y="123" width="14" height="1" fill="#fff" /><rect x="521" y="123" width="1" height="12" fill="#fff" /><rect x="524.5" y="128" width="7" height="2" fill="#000" /><rect x="527" y="125.5" width="2" height="7" fill="#000" /><text x="563.5" y="133" font-family='"Liberation Sans", sans-serif' font-size="10" font-weight="normal" fill="#000" text-anchor="middle" textLength="43" lengthAdjust="spacingAndGlyphs" stroke="#000" stroke-width="0.5">Bookmark</text><rect x="593" y="123" width="16" height="14" fill="#000" /><rect x="592" y="122" width="16" height="14" fill="#eeeeee" /><rect x="592.5" y="122.5" width="15" height="13" fill="none" stroke="#000" stroke-width="1"/><rect x="593" y="123" width="14" height="1" fill="#fff" /><rect x="593" y="123" width="1" height="12" fill="#fff" /><rect x="596.5" y="128" width="7" height="2" fill="#000" /><rect x="521" y="140" width="88" height="13" fill="#000" /><rect x="520" y="139" width="88" height="13" fill="#fff" /><rect x="520.5" y="139.5" width="87" height="12" fill="none" stroke="#000" stroke-width="1"/><text x="533.5" y="149.4" font-family='"Liberation Sans", sans-serif' font-size="10" font-weight="normal" fill="#000" text-anchor="start" textLength="50" lengthAdjust="spacingAndGlyphs" >Top Default</text></svg></div>
<div class="win palette" style="left:516px;top:159px;width:97px;height:227px"><svg width="97" height="227" viewBox="516 159 97 227" shape-rendering="crispEdges"><defs><pattern id="dots" width="2" height="2" patternUnits="userSpaceOnUse"><rect x="0" y="0" width="1" height="1" fill="#888888"/></pattern></defs><rect x="516" y="159" width="97" height="227" fill="#eeeeee" /><rect x="516" y="159" width="97" height="11" fill="#eeeeee" /><rect x="516" y="159" width="97" height="1" fill="#ccccff" /><rect x="516" y="169" width="97" height="1" fill="#aaaadd" /><rect x="516" y="159" width="1" height="11" fill="#ccccff" /><rect x="612" y="159" width="1" height="11" fill="#aaaadd" /><rect x="518" y="161" width="93" height="8" fill="url(#dots)"/><rect x="522" y="160" width="9" height="9" fill="#eeeeee" /><rect x="523.5" y="161.5" width="6" height="6" fill="#aaaaaa" stroke="#333366" stroke-width="1"/><rect x="524" y="162" width="5" height="1" fill="#ccccdd" /><rect x="524" y="162" width="1" height="5" fill="#ccccdd" /><rect x="516" y="170" width="97" height="1" fill="#000" /><rect x="520" y="175" width="89" height="13" fill="#000" /><rect x="519" y="174" width="89" height="13" fill="#fff" /><rect x="519.5" y="174.5" width="88" height="12" fill="none" stroke="#000" stroke-width="1"/><text x="531.5" y="184.4" font-family='"Liberation Sans", sans-serif' font-size="10" font-weight="normal" fill="#000" text-anchor="start" textLength="22" lengthAdjust="spacingAndGlyphs" >Light</text><polygon points="594,178 602,178 598,182.5" fill="#000" stroke="none" stroke-width="1" /><text x="520" y="205.5" font-family='"Liberation Sans", sans-serif' font-size="10" font-weight="normal" fill="#000" text-anchor="start" textLength="22" lengthAdjust="spacingAndGlyphs" stroke="#000" stroke-width="0.25">Type:</text><rect x="546" y="196" width="63" height="13" fill="#000" /><rect x="545" y="195" width="63" height="13" fill="#fff" /><rect x="545.5" y="195.5" width="62" height="12" fill="none" stroke="#000" stroke-width="1"/><text x="556" y="205.4" font-family='"Liberation Sans", sans-serif' font-size="10" font-weight="normal" fill="#000" text-anchor="start" textLength="32" lengthAdjust="spacingAndGlyphs" >Distant</text><polygon points="594,199 602,199 598,203.5" fill="#000" stroke="none" stroke-width="1" /><rect x="518" y="215" width="94" height="92" fill="#000" /><g shape-rendering="geometricPrecision" fill="none" stroke="#cccccc" stroke-width="0.9"><circle cx="564" cy="261.3" r="43.5"/><ellipse cx="564" cy="261.3" rx="43.5" ry="9.3" stroke="#aaaaaa"/><ellipse cx="564.3" cy="261.3" rx="9.8" ry="43.5" stroke="#aaaaaa"/></g><g shape-rendering="geometricPrecision"><line x1="564.5" y1="260" x2="564.5" y2="249" stroke="#fff" stroke-width="1" /><line x1="564.5" y1="260" x2="576" y2="260" stroke="#fff" stroke-width="1" /><line x1="564.5" y1="260" x2="572" y2="250" stroke="#fff" stroke-width="1" /><polygon points="564.5,247.5 562.5,251 566.5,251" fill="#fff" stroke="none" stroke-width="1" /><polygon points="577.5,260 574,258 574,262" fill="#fff" stroke="none" stroke-width="1" /><text x="564.5" y="245" font-family='"Liberation Sans", sans-serif' font-size="8" font-weight="bold" fill="#fff" text-anchor="middle" >z</text><text x="581" y="263" font-family='"Liberation Sans", sans-serif' font-size="8" font-weight="bold" fill="#fff" text-anchor="middle" >x</text><line x1="546.5" y1="286" x2="579" y2="240.5" stroke="#f09090" stroke-width="1.8" /><ellipse cx="581.3" cy="236.5" rx="9.3" ry="4.8" fill="#fff" transform="rotate(33 581.3 236.5)"/></g><text x="562.5" y="321" font-family='"Liberation Sans", sans-serif' font-size="10" font-weight="normal" fill="#000" text-anchor="end" textLength="28" lengthAdjust="spacingAndGlyphs" stroke="#000" stroke-width="0.25">Color:</text><rect x="566" y="311" width="34" height="15" fill="#fff" /><rect x="566.5" y="311.5" width="33" height="14" fill="none" stroke="#000" stroke-width="1"/><text x="562.5" y="340" font-family='"Liberation Sans", sans-serif' font-size="10" font-weight="normal" fill="#000" text-anchor="end" textLength="40.5" lengthAdjust="spacingAndGlyphs" stroke="#000" stroke-width="0.25">Intensity:</text><rect x="566" y="331" width="34" height="14" fill="#fff" /><rect x="566.5" y="331.5" width="33" height="13" fill="none" stroke="#000" stroke-width="1"/><text x="568.5" y="341" font-family='"Liberation Sans", sans-serif' font-size="10" font-weight="normal" fill="#000" text-anchor="start" textLength="25.5" lengthAdjust="spacingAndGlyphs" >100.0</text><text x="603" y="339.5" font-family='"Liberation Sans", sans-serif' font-size="10" font-weight="normal" fill="#000" text-anchor="start" textLength="8.5" lengthAdjust="spacingAndGlyphs" stroke="#000" stroke-width="0.25">%</text><text x="562.5" y="359" font-family='"Liberation Sans", sans-serif' font-size="10" font-weight="normal" fill="#000" text-anchor="end" textLength="41.5" lengthAdjust="spacingAndGlyphs" stroke="#000" stroke-width="0.25">Shadows:</text><rect x="567" y="351" width="33" height="13" fill="#000" /><rect x="566" y="350" width="33" height="13" fill="#eeeeee" /><rect x="566.5" y="350.5" width="32" height="12" fill="none" stroke="#000" stroke-width="1"/><rect x="567" y="351" width="31" height="1" fill="#fff" /><rect x="567" y="351" width="1" height="11" fill="#fff" /><text x="582.5" y="359" font-family='"Liberation Sans", sans-serif' font-size="10" font-weight="normal" fill="#000" text-anchor="middle" textLength="11" lengthAdjust="spacingAndGlyphs" >On</text><rect x="529" y="369" width="71" height="13" fill="#000" /><rect x="528" y="368" width="71" height="13" fill="#eeeeee" /><rect x="528.5" y="368.5" width="70" height="12" fill="none" stroke="#000" stroke-width="1"/><rect x="529" y="369" width="69" height="1" fill="#fff" /><rect x="529" y="369" width="1" height="11" fill="#fff" /><text x="563.5" y="378" font-family='"Liberation Sans", sans-serif' font-size="10" font-weight="normal" fill="#000" text-anchor="middle" textLength="49" lengthAdjust="spacingAndGlyphs" >Light Info...</text></svg></div>
</div></body></html>
